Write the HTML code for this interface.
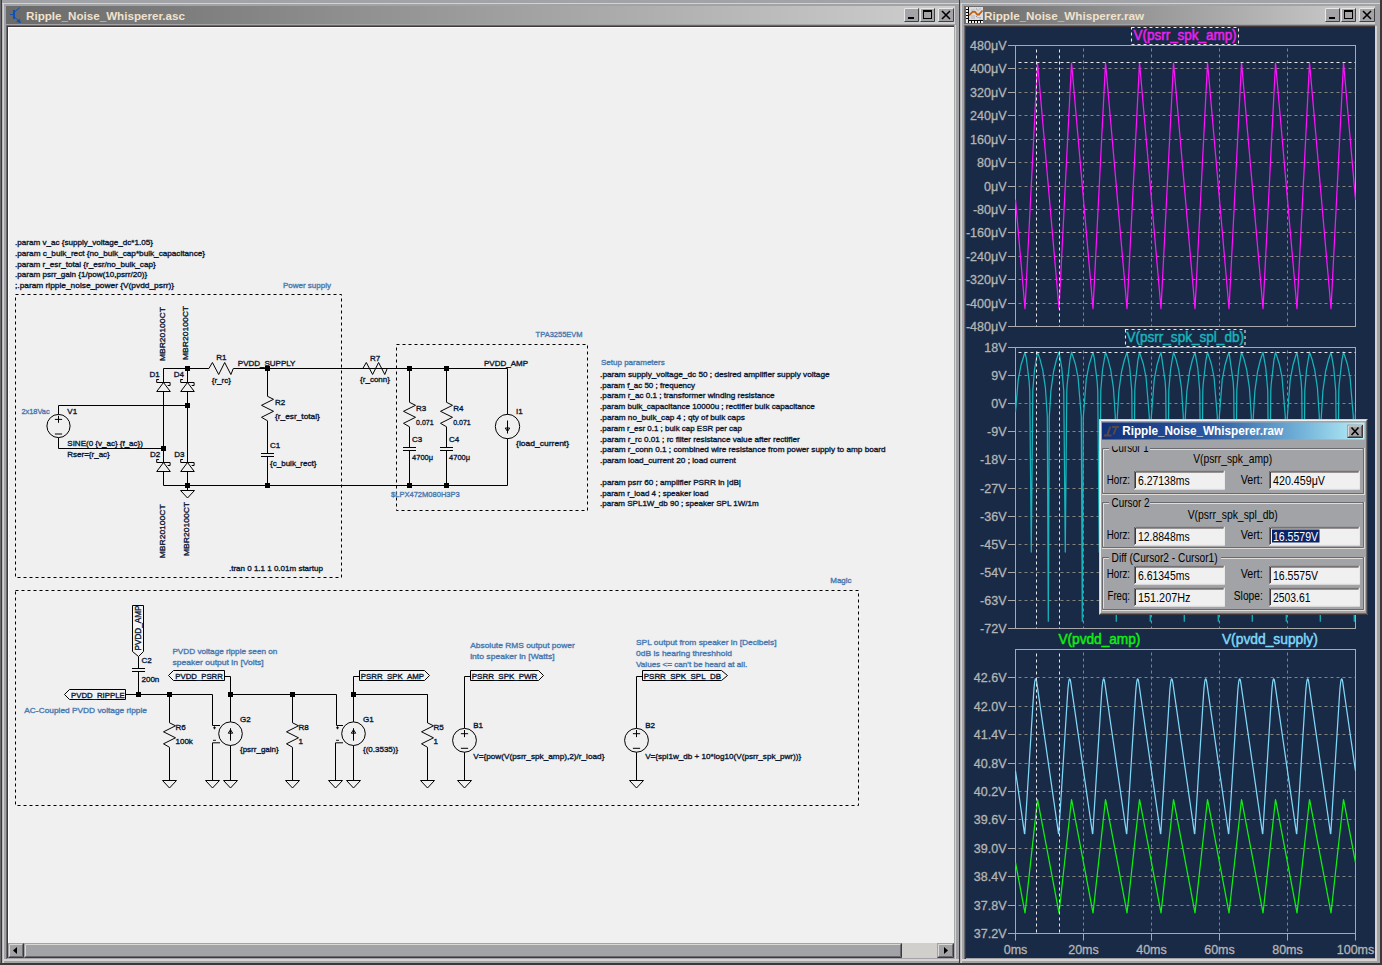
<!DOCTYPE html>
<html><head><meta charset="utf-8"><style>
html,body{margin:0;padding:0;width:1382px;height:965px;overflow:hidden;background:#a4a4a8}
svg{display:block}
</style></head><body>
<svg width="1382" height="965" viewBox="0 0 1382 965" font-family='"Liberation Sans", sans-serif'>
<rect x="0" y="0" width="1382" height="965" fill="#a2a3a6" />
<rect x="0" y="0" width="1" height="965" fill="#6a6a6e" />
<rect x="1" y="0" width="1" height="965" fill="#403838" />
<rect x="2" y="3" width="1" height="962" fill="#b8b8b8" />
<rect x="3" y="3" width="1" height="962" fill="#d6d2ce" />
<rect x="2" y="3" width="957" height="1" fill="#d6d2ce" />
<rect x="959" y="0" width="1" height="965" fill="#403838" />
<rect x="960" y="3" width="1" height="962" fill="#b8b8b8" />
<rect x="961" y="3" width="1" height="962" fill="#d6d2ce" />
<rect x="961" y="3" width="419" height="1" fill="#d6d2ce" />
<rect x="1375" y="26" width="2" height="935" fill="#d6d2ce" />
<rect x="1380" y="0" width="2" height="965" fill="#403838" />
<rect x="0" y="963" width="1382" height="2" fill="#403838" />
<rect x="4" y="959" width="955" height="2" fill="#d6d2ce" />
<rect x="962" y="959" width="415" height="2" fill="#d6d2ce" />
<defs><linearGradient id="tg" x1="0" x2="1" y1="0" y2="0"><stop offset="0" stop-color="#6a6a6a"/><stop offset="0.35" stop-color="#8e8e8e"/><stop offset="1" stop-color="#cfcfcf"/></linearGradient><linearGradient id="dg" x1="0" x2="1" y1="0" y2="0"><stop offset="0" stop-color="#10307a"/><stop offset="0.4" stop-color="#2a58a0"/><stop offset="0.75" stop-color="#70b0d8"/><stop offset="1" stop-color="#b8f0f8"/></linearGradient></defs>
<rect x="6" y="6" width="949" height="18" fill="url(#tg)" />
<rect x="964" y="6" width="411" height="18" fill="url(#tg)" />
<rect x="904" y="8" width="15" height="14" fill="#a4a4a8" />
<path d="M904.5,21.5 V8.5 H918.5" stroke="#e8e8e8" stroke-width="1" fill="none" />
<path d="M904.5,21.5 H918.5 V8.5" stroke="#404040" stroke-width="1" fill="none" />
<rect x="920" y="8" width="15" height="14" fill="#a4a4a8" />
<path d="M920.5,21.5 V8.5 H934.5" stroke="#e8e8e8" stroke-width="1" fill="none" />
<path d="M920.5,21.5 H934.5 V8.5" stroke="#404040" stroke-width="1" fill="none" />
<rect x="938" y="8" width="16" height="14" fill="#a4a4a8" />
<path d="M938.5,21.5 V8.5 H953.5" stroke="#e8e8e8" stroke-width="1" fill="none" />
<path d="M938.5,21.5 H953.5 V8.5" stroke="#404040" stroke-width="1" fill="none" />
<rect x="908" y="17" width="6" height="2" fill="#000" />
<rect x="923.5" y="10.5" width="8" height="8" fill="none" stroke="#000" stroke-width="1"/>
<rect x="923" y="10" width="9" height="2" fill="#000" />
<path d="M942,11 L950,19 M950,11 L942,19" stroke="#000" stroke-width="1.6" fill="none" />
<rect x="1325" y="8" width="15" height="14" fill="#a4a4a8" />
<path d="M1325.5,21.5 V8.5 H1339.5" stroke="#e8e8e8" stroke-width="1" fill="none" />
<path d="M1325.5,21.5 H1339.5 V8.5" stroke="#404040" stroke-width="1" fill="none" />
<rect x="1341" y="8" width="15" height="14" fill="#a4a4a8" />
<path d="M1341.5,21.5 V8.5 H1355.5" stroke="#e8e8e8" stroke-width="1" fill="none" />
<path d="M1341.5,21.5 H1355.5 V8.5" stroke="#404040" stroke-width="1" fill="none" />
<rect x="1359" y="8" width="16" height="14" fill="#a4a4a8" />
<path d="M1359.5,21.5 V8.5 H1374.5" stroke="#e8e8e8" stroke-width="1" fill="none" />
<path d="M1359.5,21.5 H1374.5 V8.5" stroke="#404040" stroke-width="1" fill="none" />
<rect x="1329" y="17" width="6" height="2" fill="#000" />
<rect x="1344.5" y="10.5" width="8" height="8" fill="none" stroke="#000" stroke-width="1"/>
<rect x="1344" y="10" width="9" height="2" fill="#000" />
<path d="M1363,11 L1371,19 M1371,11 L1363,19" stroke="#000" stroke-width="1.6" fill="none" />
<g font-family='"Liberation Sans", sans-serif'>
<text x="26" y="20" font-size="11.6" fill="#f0e2cc" text-anchor="start" font-weight="bold" textLength="159" lengthAdjust="spacingAndGlyphs" >Ripple_Noise_Whisperer.asc</text>
<text x="984" y="20" font-size="11.6" fill="#f0e2cc" text-anchor="start" font-weight="bold" textLength="160" lengthAdjust="spacingAndGlyphs" >Ripple_Noise_Whisperer.raw</text>
</g>
<path d="M10,14.5 H13.5 M15,11.5 L20,7.5 M15,17.5 L20.5,22.5" stroke="#1050b0" stroke-width="1" fill="none" />
<rect x="13" y="10" width="2" height="9" fill="#1050b0" />
<path d="M16.8,21.6 L19.3,19.3 L20.4,22.4 Z" stroke="#1050b0" stroke-width="0.8" fill="#1050b0" />
<rect x="966" y="7" width="17" height="16" fill="#000" />
<rect x="969" y="7" width="14" height="13" fill="#dcdcdc" />
<rect x="966" y="7" width="2" height="2" fill="#f4f4f4" />
<rect x="966" y="10" width="2" height="2" fill="#f4f4f4" />
<rect x="966" y="13" width="2" height="2" fill="#f4f4f4" />
<rect x="966" y="16" width="2" height="2" fill="#f4f4f4" />
<rect x="966" y="19" width="2" height="2" fill="#f4f4f4" />
<rect x="966" y="21" width="2" height="2" fill="#f4f4f4" />
<rect x="969" y="21" width="2" height="2" fill="#f4f4f4" />
<rect x="972" y="21" width="2" height="2" fill="#f4f4f4" />
<rect x="975" y="21" width="2" height="2" fill="#f4f4f4" />
<rect x="978" y="21" width="2" height="2" fill="#f4f4f4" />
<rect x="981" y="21" width="2" height="2" fill="#f4f4f4" />
<rect x="971.5" y="9.5" width="1" height="1" fill="#9090a0" />
<rect x="973.5" y="9.5" width="1" height="1" fill="#9090a0" />
<rect x="976" y="8.5" width="1" height="1" fill="#9090a0" />
<rect x="977.5" y="9.5" width="1" height="1" fill="#9090a0" />
<rect x="979.5" y="8.5" width="1" height="1" fill="#9090a0" />
<rect x="971.5" y="15.5" width="1" height="1" fill="#9090a0" />
<rect x="973.5" y="15.5" width="1" height="1" fill="#9090a0" />
<rect x="976" y="16" width="1" height="1" fill="#9090a0" />
<rect x="977.5" y="17" width="1" height="1" fill="#9090a0" />
<rect x="979.5" y="17" width="1" height="1" fill="#9090a0" />
<rect x="971.5" y="17.5" width="1" height="1" fill="#9090a0" />
<rect x="973.5" y="17.5" width="1" height="1" fill="#9090a0" />
<rect x="979.5" y="18.5" width="1" height="1" fill="#9090a0" />
<path d="M969,15.5 L972.5,11.8 H975 L977.2,14.5 H979 L982.5,10.5" stroke="#c06010" stroke-width="1.8" fill="none" />
<rect x="6" y="25" width="949" height="1" fill="#6a6a6e" />
<rect x="6" y="25" width="1" height="934" fill="#6a6a6e" />
<rect x="7" y="26" width="948" height="1" fill="#403838" />
<rect x="7" y="26" width="1" height="932" fill="#403838" />
<rect x="8" y="27" width="946" height="916" fill="#ffffff" />
<rect x="9" y="28" width="945" height="915" fill="#f0f0f0" />
<rect x="954" y="25" width="1" height="934" fill="#a8a8a8" />
<rect x="955" y="25" width="1" height="936" fill="#d6d2ce" />
<rect x="8" y="943" width="946" height="15" fill="#a2a3a6" />
<rect x="8" y="943" width="16" height="15" fill="#a2a3a6" />
<path d="M9.5,956.5 V944.5 H22.5" stroke="#dcd8d4" stroke-width="1" fill="none" />
<path d="M9.5,956.5 H22.5 V944.5" stroke="#6a6a6e" stroke-width="1" fill="none" />
<path d="M8.5,957.5 H23.5 V943.5" stroke="#403838" stroke-width="1" fill="none" />
<path d="M13,950.5 L17,947 V954 Z" stroke="none" stroke-width="1" fill="#000" />
<rect x="24" y="943" width="878" height="15" fill="#a2a3a6" />
<path d="M25.5,956.5 V944.5 H900.5" stroke="#dcd8d4" stroke-width="1" fill="none" />
<path d="M25.5,956.5 H900.5 V944.5" stroke="#6a6a6e" stroke-width="1" fill="none" />
<path d="M24.5,957.5 H901.5 V943.5" stroke="#403838" stroke-width="1" fill="none" />
<rect x="902" y="943" width="36" height="15" fill="#d0cfcb" />
<rect x="937" y="943" width="17" height="15" fill="#a2a3a6" />
<path d="M938.5,956.5 V944.5 H952.5" stroke="#dcd8d4" stroke-width="1" fill="none" />
<path d="M938.5,956.5 H952.5 V944.5" stroke="#6a6a6e" stroke-width="1" fill="none" />
<path d="M937.5,957.5 H953.5 V943.5" stroke="#403838" stroke-width="1" fill="none" />
<path d="M948,950.5 L944,947 V954 Z" stroke="none" stroke-width="1" fill="#000" />
<rect x="8" y="958" width="947" height="1" fill="#a4a4a8" />
<rect x="964" y="25" width="411" height="1" fill="#6a6a6e" />
<rect x="964" y="25" width="1" height="934" fill="#6a6a6e" />
<rect x="965" y="26" width="410" height="1" fill="#403838" />
<rect x="965" y="26" width="1" height="933" fill="#403838" />
<rect x="966" y="27" width="409" height="931" fill="#182a46" />
<g font-family='"Liberation Sans", sans-serif'>
<text x="15" y="245.1" font-size="8" fill="#0c1a34" text-anchor="start" font-weight="normal" textLength="137.9" lengthAdjust="spacingAndGlyphs" stroke="#0c1a34" stroke-width="0.35">.param v_ac {supply_voltage_dc*1.05}</text>
<text x="15" y="255.79999999999998" font-size="8" fill="#0c1a34" text-anchor="start" font-weight="normal" textLength="190" lengthAdjust="spacingAndGlyphs" stroke="#0c1a34" stroke-width="0.35">.param c_bulk_rect {no_bulk_cap*bulk_capacitance}</text>
<text x="15" y="266.5" font-size="8" fill="#0c1a34" text-anchor="start" font-weight="normal" textLength="140.7" lengthAdjust="spacingAndGlyphs" stroke="#0c1a34" stroke-width="0.35">.param r_esr_total {r_esr/no_bulk_cap}</text>
<text x="15" y="277.2" font-size="8" fill="#0c1a34" text-anchor="start" font-weight="normal" textLength="132.1" lengthAdjust="spacingAndGlyphs" stroke="#0c1a34" stroke-width="0.35">.param psrr_gain {1/pow(10,psrr/20)}</text>
<text x="15" y="287.9" font-size="8" fill="#0c1a34" text-anchor="start" font-weight="normal" textLength="159" lengthAdjust="spacingAndGlyphs" stroke="#0c1a34" stroke-width="0.35">;.param ripple_noise_power {V(pvdd_psrr)}</text>
<text x="331" y="288" font-size="8" fill="#4a7ab0" text-anchor="end" font-weight="normal" stroke="#4a7ab0" stroke-width="0.35">Power supply</text>
<rect x="15.5" y="294.5" width="326.0" height="283.0" fill="none" stroke="#000" stroke-width="1" stroke-dasharray="3,3"/>
<path d="M163.5,382.5 L163.5,368.5 L208.9,368.5" stroke="#000" stroke-width="1.0" fill="none" stroke-linejoin="miter"/>
<path d="M208.9,368.5 L212.4,362.5 L218.70000000000002,374.5 L224.70000000000002,362.5 L230.9,374.5 L233.3,368.5" stroke="#000" stroke-width="1.0" fill="none" stroke-linejoin="miter"/>
<path d="M233.3,368.5 L396,368.5" stroke="#000" stroke-width="1.0" fill="none" stroke-linejoin="miter"/>
<path d="M187.5,368.5 L187.5,382.5" stroke="#000" stroke-width="1.0" fill="none" stroke-linejoin="miter"/>
<rect x="185.0" y="366.0" width="5" height="5" fill="#000" />
<rect x="265.0" y="366.0" width="5" height="5" fill="#000" />
<path d="M156.7,379.5 H158.9 M156.7,379.3 V382.5 H170.1 V385.5 H167.7" stroke="#000" stroke-width="1.0" fill="none" />
<path d="M163.5,382.5 L156.7,391.5 H170.3 Z" stroke="#000" stroke-width="1.0" fill="none" />
<path d="M180.7,379.5 H182.9 M180.7,379.3 V382.5 H194.1 V385.5 H191.7" stroke="#000" stroke-width="1.0" fill="none" />
<path d="M187.5,382.5 L180.7,391.5 H194.3 Z" stroke="#000" stroke-width="1.0" fill="none" />
<path d="M163.5,391.5 L163.5,462.5" stroke="#000" stroke-width="1.0" fill="none" stroke-linejoin="miter"/>
<path d="M187.5,391.5 L187.5,462.5" stroke="#000" stroke-width="1.0" fill="none" stroke-linejoin="miter"/>
<path d="M156.7,459.5 H158.9 M156.7,459.3 V462.5 H170.1 V465.5 H167.7" stroke="#000" stroke-width="1.0" fill="none" />
<path d="M163.5,462.5 L156.7,471.5 H170.3 Z" stroke="#000" stroke-width="1.0" fill="none" />
<path d="M180.7,459.5 H182.9 M180.7,459.3 V462.5 H194.1 V465.5 H191.7" stroke="#000" stroke-width="1.0" fill="none" />
<path d="M187.5,462.5 L180.7,471.5 H194.3 Z" stroke="#000" stroke-width="1.0" fill="none" />
<path d="M163.5,471.5 L163.5,485.5 L396,485.5" stroke="#000" stroke-width="1.0" fill="none" stroke-linejoin="miter"/>
<path d="M187.5,471.5 L187.5,485.5" stroke="#000" stroke-width="1.0" fill="none" stroke-linejoin="miter"/>
<rect x="185.0" y="483.0" width="5" height="5" fill="#000" />
<rect x="265.0" y="483.0" width="5" height="5" fill="#000" />
<path d="M187.5,485.5 V490.5 M180.5,490.5 H194.5 L187.5,498.0 Z" stroke="#000" stroke-width="1.0" fill="none" />
<path d="M58.5,414.4 L58.5,405.5 L187.5,405.5" stroke="#000" stroke-width="1.0" fill="none" stroke-linejoin="miter"/>
<rect x="185.0" y="403.0" width="5" height="5" fill="#000" />
<path d="M58.5,437.6 L58.5,448.5 L163.5,448.5" stroke="#000" stroke-width="1.0" fill="none" stroke-linejoin="miter"/>
<rect x="161.0" y="446.0" width="5" height="5" fill="#000" />
<circle cx="58.5" cy="426" r="11.6" fill="none" stroke="#000" stroke-width="1.0"/>
<path d="M54.9,419.4 H62.1 M58.5,415.7 V422.8 M54.9,434 H62.1" stroke="#000" stroke-width="1.0" fill="none" />
<text x="49.7" y="414" font-size="8" fill="#4a7ab0" text-anchor="end" font-weight="normal" textLength="28.3" lengthAdjust="spacingAndGlyphs" stroke="#4a7ab0" stroke-width="0.35">2x18Vac</text>
<text x="67.3" y="414" font-size="8" fill="#0c1a34" text-anchor="start" font-weight="normal" stroke="#0c1a34" stroke-width="0.35">V1</text>
<text x="67.3" y="445.5" font-size="8" fill="#0c1a34" text-anchor="start" font-weight="normal" stroke="#0c1a34" stroke-width="0.35">SINE(0 {v_ac} {f_ac})</text>
<text x="67.3" y="456.5" font-size="8" fill="#0c1a34" text-anchor="start" font-weight="normal" stroke="#0c1a34" stroke-width="0.35">Rser={r_ac}</text>
<text x="159.8" y="377" font-size="8" fill="#0c1a34" text-anchor="end" font-weight="normal" stroke="#0c1a34" stroke-width="0.35">D1</text>
<text x="184" y="377" font-size="8" fill="#0c1a34" text-anchor="end" font-weight="normal" stroke="#0c1a34" stroke-width="0.35">D4</text>
<text x="160.3" y="457" font-size="8" fill="#0c1a34" text-anchor="end" font-weight="normal" stroke="#0c1a34" stroke-width="0.35">D2</text>
<text x="184.5" y="457" font-size="8" fill="#0c1a34" text-anchor="end" font-weight="normal" stroke="#0c1a34" stroke-width="0.35">D3</text>
<text transform="translate(164.8,361.1) rotate(-90)" font-size="8" fill="#0c1a34" stroke="#0c1a34" stroke-width="0.35" textLength="54" lengthAdjust="spacingAndGlyphs">MBR20100CT</text>
<text transform="translate(187.8,360) rotate(-90)" font-size="8" fill="#0c1a34" stroke="#0c1a34" stroke-width="0.35" textLength="54" lengthAdjust="spacingAndGlyphs">MBR20100CT</text>
<text transform="translate(164.8,558.3) rotate(-90)" font-size="8" fill="#0c1a34" stroke="#0c1a34" stroke-width="0.35" textLength="54" lengthAdjust="spacingAndGlyphs">MBR20100CT</text>
<text transform="translate(189.2,556) rotate(-90)" font-size="8" fill="#0c1a34" stroke="#0c1a34" stroke-width="0.35" textLength="54" lengthAdjust="spacingAndGlyphs">MBR20100CT</text>
<text x="221.3" y="360" font-size="8" fill="#0c1a34" text-anchor="middle" font-weight="normal" stroke="#0c1a34" stroke-width="0.35">R1</text>
<text x="221.3" y="382.8" font-size="8" fill="#0c1a34" text-anchor="middle" font-weight="normal" stroke="#0c1a34" stroke-width="0.35">{r_rc}</text>
<text x="237.8" y="366.2" font-size="8" fill="#0c1a34" text-anchor="start" font-weight="normal" stroke="#0c1a34" stroke-width="0.35">PVDD_SUPPLY</text>
<path d="M267.5,368.5 L267.5,396.3" stroke="#000" stroke-width="1.0" fill="none" stroke-linejoin="miter"/>
<path d="M267.5,396.3 L273.5,399.3 L261.5,405.3 L273.5,411.3 L261.5,417.3 L267.5,420.8" stroke="#000" stroke-width="1.0" fill="none" stroke-linejoin="miter"/>
<path d="M267.5,420.8 L267.5,453.5" stroke="#000" stroke-width="1.0" fill="none" stroke-linejoin="miter"/>
<line x1="261.0" y1="453.5" x2="274.0" y2="453.5" stroke="#000" stroke-width="1" />
<line x1="261.0" y1="456.5" x2="274.0" y2="456.5" stroke="#000" stroke-width="1" />
<path d="M267.5,456.5 L267.5,485.5" stroke="#000" stroke-width="1.0" fill="none" stroke-linejoin="miter"/>
<text x="275" y="405" font-size="8" fill="#0c1a34" text-anchor="start" font-weight="normal" stroke="#0c1a34" stroke-width="0.35">R2</text>
<text x="275" y="419" font-size="8" fill="#0c1a34" text-anchor="start" font-weight="normal" textLength="44.8" lengthAdjust="spacingAndGlyphs" stroke="#0c1a34" stroke-width="0.35">{r_esr_total}</text>
<text x="270.1" y="447.8" font-size="8" fill="#0c1a34" text-anchor="start" font-weight="normal" stroke="#0c1a34" stroke-width="0.35">C1</text>
<text x="270.1" y="465.7" font-size="8" fill="#0c1a34" text-anchor="start" font-weight="normal" stroke="#0c1a34" stroke-width="0.35">{c_bulk_rect}</text>
<text x="229" y="571" font-size="8" fill="#0c1a34" text-anchor="start" font-weight="normal" stroke="#0c1a34" stroke-width="0.35">.tran 0 1.1 1 0.01m startup</text>
<text x="582.6" y="337" font-size="8" fill="#4a7ab0" text-anchor="end" font-weight="normal" textLength="47" lengthAdjust="spacingAndGlyphs" stroke="#4a7ab0" stroke-width="0.35">TPA3255EVM</text>
<rect x="396.5" y="344.5" width="191.0" height="166.0" fill="none" stroke="#000" stroke-width="1" stroke-dasharray="3,3"/>
<path d="M362.8,368.5 L366.3,362.5 L372.6,374.5 L378.6,362.5 L384.8,374.5 L387.2,368.5" stroke="#000" stroke-width="1.0" fill="none" stroke-linejoin="miter"/>
<path d="M341.5,368.5 L362.8,368.5" stroke="#000" stroke-width="1.0" fill="none" stroke-linejoin="miter"/>
<path d="M387.2,368.5 L507.5,368.5 L507.5,414.5" stroke="#000" stroke-width="1.0" fill="none" stroke-linejoin="miter"/>
<path d="M341.5,485.5 L507.5,485.5 L507.5,438.5" stroke="#000" stroke-width="1.0" fill="none" stroke-linejoin="miter"/>
<rect x="407.0" y="366.0" width="5" height="5" fill="#000" />
<rect x="407.0" y="483.0" width="5" height="5" fill="#000" />
<path d="M409.5,368.5 L409.5,402.3" stroke="#000" stroke-width="1.0" fill="none" stroke-linejoin="miter"/>
<path d="M409.5,402.3 L415.5,405.3 L403.5,411.3 L415.5,417.3 L403.5,423.3 L409.5,426.8" stroke="#000" stroke-width="1.0" fill="none" stroke-linejoin="miter"/>
<path d="M409.5,426.8 L409.5,447.5" stroke="#000" stroke-width="1.0" fill="none" stroke-linejoin="miter"/>
<line x1="403.0" y1="447.5" x2="416.0" y2="447.5" stroke="#000" stroke-width="1" />
<line x1="403.0" y1="450.5" x2="416.0" y2="450.5" stroke="#000" stroke-width="1" />
<path d="M409.5,450.5 L409.5,485.5" stroke="#000" stroke-width="1.0" fill="none" stroke-linejoin="miter"/>
<rect x="444.0" y="366.0" width="5" height="5" fill="#000" />
<rect x="444.0" y="483.0" width="5" height="5" fill="#000" />
<path d="M446.5,368.5 L446.5,402.3" stroke="#000" stroke-width="1.0" fill="none" stroke-linejoin="miter"/>
<path d="M446.5,402.3 L452.5,405.3 L440.5,411.3 L452.5,417.3 L440.5,423.3 L446.5,426.8" stroke="#000" stroke-width="1.0" fill="none" stroke-linejoin="miter"/>
<path d="M446.5,426.8 L446.5,447.5" stroke="#000" stroke-width="1.0" fill="none" stroke-linejoin="miter"/>
<line x1="440.0" y1="447.5" x2="453.0" y2="447.5" stroke="#000" stroke-width="1" />
<line x1="440.0" y1="450.5" x2="453.0" y2="450.5" stroke="#000" stroke-width="1" />
<path d="M446.5,450.5 L446.5,485.5" stroke="#000" stroke-width="1.0" fill="none" stroke-linejoin="miter"/>
<circle cx="507.5" cy="426.5" r="12.2" fill="none" stroke="#000" stroke-width="1.0"/>
<path d="M507.5,420.5 V433.5 M505.3,428.0 H509.7 L507.5,431.5 Z" stroke="#000" stroke-width="1.0" fill="none" />
<text x="375.0" y="360.8" font-size="8" fill="#0c1a34" text-anchor="middle" font-weight="normal" stroke="#0c1a34" stroke-width="0.35">R7</text>
<text x="375" y="382" font-size="8" fill="#0c1a34" text-anchor="middle" font-weight="normal" stroke="#0c1a34" stroke-width="0.35">{r_conn}</text>
<text x="484" y="366" font-size="8" fill="#0c1a34" text-anchor="start" font-weight="normal" stroke="#0c1a34" stroke-width="0.35">PVDD_AMP</text>
<text x="416.1" y="411" font-size="8" fill="#0c1a34" text-anchor="start" font-weight="normal" stroke="#0c1a34" stroke-width="0.35">R3</text>
<text x="416.1" y="425" font-size="8" fill="#0c1a34" text-anchor="start" font-weight="normal" textLength="17.5" lengthAdjust="spacingAndGlyphs" stroke="#0c1a34" stroke-width="0.35">0.071</text>
<text x="412.1" y="442" font-size="8" fill="#0c1a34" text-anchor="start" font-weight="normal" stroke="#0c1a34" stroke-width="0.35">C3</text>
<text x="412.1" y="460.3" font-size="8" fill="#0c1a34" text-anchor="start" font-weight="normal" textLength="20.9" lengthAdjust="spacingAndGlyphs" stroke="#0c1a34" stroke-width="0.35">4700μ</text>
<text x="453.2" y="411" font-size="8" fill="#0c1a34" text-anchor="start" font-weight="normal" stroke="#0c1a34" stroke-width="0.35">R4</text>
<text x="453.2" y="425" font-size="8" fill="#0c1a34" text-anchor="start" font-weight="normal" textLength="17.5" lengthAdjust="spacingAndGlyphs" stroke="#0c1a34" stroke-width="0.35">0.071</text>
<text x="449.1" y="442" font-size="8" fill="#0c1a34" text-anchor="start" font-weight="normal" stroke="#0c1a34" stroke-width="0.35">C4</text>
<text x="449.1" y="460.3" font-size="8" fill="#0c1a34" text-anchor="start" font-weight="normal" textLength="20.9" lengthAdjust="spacingAndGlyphs" stroke="#0c1a34" stroke-width="0.35">4700μ</text>
<text x="516.1" y="414" font-size="8" fill="#0c1a34" text-anchor="start" font-weight="normal" stroke="#0c1a34" stroke-width="0.35">I1</text>
<text x="516.1" y="445.5" font-size="8" fill="#0c1a34" text-anchor="start" font-weight="normal" textLength="53" lengthAdjust="spacingAndGlyphs" stroke="#0c1a34" stroke-width="0.35">{load_current}</text>
<text x="391" y="496.8" font-size="8" fill="#4a7ab0" text-anchor="start" font-weight="normal" textLength="68.8" lengthAdjust="spacingAndGlyphs" stroke="#4a7ab0" stroke-width="0.35">$LPX472M080H3P3</text>
<text x="601" y="364.6" font-size="8" fill="#4a7ab0" text-anchor="start" font-weight="normal" textLength="63.7" lengthAdjust="spacingAndGlyphs" stroke="#4a7ab0" stroke-width="0.35">Setup parameters</text>
<text x="600.1" y="376.7" font-size="8" fill="#0c1a34" text-anchor="start" font-weight="normal" textLength="229.5" lengthAdjust="spacingAndGlyphs" stroke="#0c1a34" stroke-width="0.35">.param supply_voltage_dc 50 ; desired amplifier supply voltage</text>
<text x="600.1" y="387.5" font-size="8" fill="#0c1a34" text-anchor="start" font-weight="normal" textLength="94.9" lengthAdjust="spacingAndGlyphs" stroke="#0c1a34" stroke-width="0.35">.param f_ac 50 ; frequency</text>
<text x="600.1" y="398.3" font-size="8" fill="#0c1a34" text-anchor="start" font-weight="normal" textLength="174.5" lengthAdjust="spacingAndGlyphs" stroke="#0c1a34" stroke-width="0.35">.param r_ac 0.1 ; transformer winding resistance</text>
<text x="600.1" y="409.1" font-size="8" fill="#0c1a34" text-anchor="start" font-weight="normal" textLength="214.7" lengthAdjust="spacingAndGlyphs" stroke="#0c1a34" stroke-width="0.35">.param bulk_capacitance 10000u ; rectifier bulk capacitance</text>
<text x="600.1" y="419.9" font-size="8" fill="#0c1a34" text-anchor="start" font-weight="normal" textLength="144.7" lengthAdjust="spacingAndGlyphs" stroke="#0c1a34" stroke-width="0.35">.param no_bulk_cap 4 ; qty of bulk caps</text>
<text x="600.1" y="430.7" font-size="8" fill="#0c1a34" text-anchor="start" font-weight="normal" textLength="141.8" lengthAdjust="spacingAndGlyphs" stroke="#0c1a34" stroke-width="0.35">.param r_esr 0.1 ; bulk cap ESR per cap</text>
<text x="600.1" y="441.5" font-size="8" fill="#0c1a34" text-anchor="start" font-weight="normal" textLength="199.6" lengthAdjust="spacingAndGlyphs" stroke="#0c1a34" stroke-width="0.35">.param r_rc 0.01 ; rc filter resistance value after rectifier</text>
<text x="600.1" y="452.3" font-size="8" fill="#0c1a34" text-anchor="start" font-weight="normal" textLength="285.5" lengthAdjust="spacingAndGlyphs" stroke="#0c1a34" stroke-width="0.35">.param r_conn 0.1 ; combined wire resistance from power supply to amp board</text>
<text x="600.1" y="463.1" font-size="8" fill="#0c1a34" text-anchor="start" font-weight="normal" textLength="135.7" lengthAdjust="spacingAndGlyphs" stroke="#0c1a34" stroke-width="0.35">.param load_current 20 ; load current</text>
<text x="600.1" y="484.7" font-size="8" fill="#0c1a34" text-anchor="start" font-weight="normal" textLength="140.9" lengthAdjust="spacingAndGlyphs" stroke="#0c1a34" stroke-width="0.35">.param psrr 60 ; amplifier PSRR in |dB|</text>
<text x="600.1" y="495.5" font-size="8" fill="#0c1a34" text-anchor="start" font-weight="normal" textLength="108.3" lengthAdjust="spacingAndGlyphs" stroke="#0c1a34" stroke-width="0.35">.param r_load 4 ; speaker load</text>
<text x="600.1" y="506.3" font-size="8" fill="#0c1a34" text-anchor="start" font-weight="normal" textLength="158.6" lengthAdjust="spacingAndGlyphs" stroke="#0c1a34" stroke-width="0.35">.param SPL1W_db 90 ; speaker SPL 1W/1m</text>
<text x="851.6" y="583" font-size="8" fill="#4a7ab0" text-anchor="end" font-weight="normal" stroke="#4a7ab0" stroke-width="0.35">Magic</text>
<rect x="15.5" y="590.5" width="843.0" height="215.0" fill="none" stroke="#000" stroke-width="1" stroke-dasharray="3,3"/>
<path d="M125.5,689.5 H69.5 L64.5,694.5 L69.5,699.5 H125.5 Z" stroke="#000" stroke-width="1" fill="#f4f4f4" />
<text x="71" y="697.8" font-size="8" fill="#0c1a34" text-anchor="start" font-weight="normal" textLength="53.7" lengthAdjust="spacingAndGlyphs" stroke="#0c1a34" stroke-width="0.35">PVDD_RIPPLE</text>
<text x="24.3" y="712.5" font-size="8" fill="#4a7ab0" text-anchor="start" font-weight="normal" textLength="122.6" lengthAdjust="spacingAndGlyphs" stroke="#4a7ab0" stroke-width="0.35">AC-Coupled PVDD voltage ripple</text>
<path d="M125,694.5 L169.5,694.5" stroke="#000" stroke-width="1.0" fill="none" stroke-linejoin="miter"/>
<path d="M138.5,656.5 L138.5,668.5" stroke="#000" stroke-width="1.0" fill="none" stroke-linejoin="miter"/>
<line x1="132.0" y1="668.5" x2="145.0" y2="668.5" stroke="#000" stroke-width="1" />
<line x1="132.0" y1="671.5" x2="145.0" y2="671.5" stroke="#000" stroke-width="1" />
<path d="M138.5,671.5 L138.5,694.5" stroke="#000" stroke-width="1.0" fill="none" stroke-linejoin="miter"/>
<rect x="136.0" y="692.0" width="5" height="5" fill="#000" />
<path d="M132.5,605.5 H143.5 V651.5 L138.5,656.5 L132.5,651.5 Z" stroke="#000" stroke-width="1" fill="#f4f4f4" />
<text transform="translate(141.3,650.5) rotate(-90)" font-size="8.6" fill="#0c1a34" stroke="#0c1a34" stroke-width="0.35" textLength="45" lengthAdjust="spacingAndGlyphs">PVDD_AMP</text>
<text x="141.5" y="663" font-size="8" fill="#0c1a34" text-anchor="start" font-weight="normal" stroke="#0c1a34" stroke-width="0.35">C2</text>
<text x="141.5" y="682" font-size="8" fill="#0c1a34" text-anchor="start" font-weight="normal" stroke="#0c1a34" stroke-width="0.35">200n</text>
<path d="M169.5,694.5 L212.5,694.5 L212.5,725.5 L220.0,725.5" stroke="#000" stroke-width="1.0" fill="none" stroke-linejoin="miter"/>
<path d="M225,676.5 L230.5,676.5 L230.5,721.9" stroke="#000" stroke-width="1.0" fill="none" stroke-linejoin="miter"/>
<path d="M230.5,694.5 L292.5,694.5 L336.5,694.5 L336.5,725.5 L343.0,725.5" stroke="#000" stroke-width="1.0" fill="none" stroke-linejoin="miter"/>
<path d="M359,676.5 L353.5,676.5 L353.5,721.9" stroke="#000" stroke-width="1.0" fill="none" stroke-linejoin="miter"/>
<path d="M353.5,694.5 L427.5,694.5 L427.5,722.8" stroke="#000" stroke-width="1.0" fill="none" stroke-linejoin="miter"/>
<rect x="167.0" y="692.0" width="5" height="5" fill="#000" />
<rect x="228.0" y="692.0" width="5" height="5" fill="#000" />
<rect x="290.0" y="692.0" width="5" height="5" fill="#000" />
<rect x="351.0" y="692.0" width="5" height="5" fill="#000" />
<path d="M224.5,670.5 H173.5 L168.5,675.5 L173.5,680.5 H224.5 Z" stroke="#000" stroke-width="1" fill="#f4f4f4" />
<text x="175.3" y="678.8" font-size="8" fill="#0c1a34" text-anchor="start" font-weight="normal" textLength="47.5" lengthAdjust="spacingAndGlyphs" stroke="#0c1a34" stroke-width="0.35">PVDD_PSRR</text>
<path d="M359.5,670.5 H424.5 L429.5,675.5 L424.5,680.5 H359.5 Z" stroke="#000" stroke-width="1" fill="#f4f4f4" />
<text x="360.8" y="678.8" font-size="8" fill="#0c1a34" text-anchor="start" font-weight="normal" textLength="63.3" lengthAdjust="spacingAndGlyphs" stroke="#0c1a34" stroke-width="0.35">PSRR_SPK_AMP</text>
<text x="172.4" y="653.5" font-size="8" fill="#4a7ab0" text-anchor="start" font-weight="normal" textLength="105" lengthAdjust="spacingAndGlyphs" stroke="#4a7ab0" stroke-width="0.35">PVDD voltage ripple seen on</text>
<text x="172.4" y="664.5" font-size="8" fill="#4a7ab0" text-anchor="start" font-weight="normal" textLength="91.3" lengthAdjust="spacingAndGlyphs" stroke="#4a7ab0" stroke-width="0.35">speaker output in [Volts]</text>
<path d="M169.5,694.5 L169.5,722.8" stroke="#000" stroke-width="1.0" fill="none" stroke-linejoin="miter"/>
<path d="M169.5,722.8 L175.5,725.8 L163.5,731.8 L175.5,737.8 L163.5,743.8 L169.5,747.3" stroke="#000" stroke-width="1.0" fill="none" stroke-linejoin="miter"/>
<path d="M169.5,747.3 L169.5,780.5" stroke="#000" stroke-width="1.0" fill="none" stroke-linejoin="miter"/>
<path d="M169.5,780.5 V780.5 M162.5,780.5 H176.5 L169.5,788.0 Z" stroke="#000" stroke-width="1.0" fill="none" />
<text x="175.5" y="729.5" font-size="8" fill="#0c1a34" text-anchor="start" font-weight="normal" stroke="#0c1a34" stroke-width="0.35">R6</text>
<text x="175.5" y="743.5" font-size="8" fill="#0c1a34" text-anchor="start" font-weight="normal" stroke="#0c1a34" stroke-width="0.35">100k</text>
<path d="M292.5,694.5 L292.5,722.8" stroke="#000" stroke-width="1.0" fill="none" stroke-linejoin="miter"/>
<path d="M292.5,722.8 L298.5,725.8 L286.5,731.8 L298.5,737.8 L286.5,743.8 L292.5,747.3" stroke="#000" stroke-width="1.0" fill="none" stroke-linejoin="miter"/>
<path d="M292.5,747.3 L292.5,780.5" stroke="#000" stroke-width="1.0" fill="none" stroke-linejoin="miter"/>
<path d="M292.5,780.5 V780.5 M285.5,780.5 H299.5 L292.5,788.0 Z" stroke="#000" stroke-width="1.0" fill="none" />
<text x="298.5" y="729.5" font-size="8" fill="#0c1a34" text-anchor="start" font-weight="normal" stroke="#0c1a34" stroke-width="0.35">R8</text>
<text x="298.5" y="743.5" font-size="8" fill="#0c1a34" text-anchor="start" font-weight="normal" stroke="#0c1a34" stroke-width="0.35">1</text>
<path d="M427.5,694.5 L427.5,722.8" stroke="#000" stroke-width="1.0" fill="none" stroke-linejoin="miter"/>
<path d="M427.5,722.8 L433.5,725.8 L421.5,731.8 L433.5,737.8 L421.5,743.8 L427.5,747.3" stroke="#000" stroke-width="1.0" fill="none" stroke-linejoin="miter"/>
<path d="M427.5,747.3 L427.5,780.5" stroke="#000" stroke-width="1.0" fill="none" stroke-linejoin="miter"/>
<path d="M427.5,780.5 V780.5 M420.5,780.5 H434.5 L427.5,788.0 Z" stroke="#000" stroke-width="1.0" fill="none" />
<text x="433.5" y="729.5" font-size="8" fill="#0c1a34" text-anchor="start" font-weight="normal" stroke="#0c1a34" stroke-width="0.35">R5</text>
<text x="433.5" y="743.5" font-size="8" fill="#0c1a34" text-anchor="start" font-weight="normal" stroke="#0c1a34" stroke-width="0.35">1</text>
<circle cx="230.5" cy="733.7" r="11.8" fill="none" stroke="#000" stroke-width="1.0"/>
<path d="M230.5,740.7 V728.2 M228.3,733.2 H232.7 L230.5,729.7 Z" stroke="#000" stroke-width="1.0" fill="none" />
<path d="M230.5,745.5 L230.5,780.5" stroke="#000" stroke-width="1.0" fill="none" stroke-linejoin="miter"/>
<path d="M230.5,780.5 V780.5 M223.5,780.5 H237.5 L230.5,788.0 Z" stroke="#000" stroke-width="1.0" fill="none" />
<path d="M220.0,742.8 L212.5,742.8 L212.5,780.5" stroke="#000" stroke-width="1.0" fill="none" stroke-linejoin="miter"/>
<path d="M212.5,780.5 V780.5 M205.5,780.5 H219.5 L212.5,788.0 Z" stroke="#000" stroke-width="1.0" fill="none" />
<path d="M213.0,727.8 h3 M214.5,726.3 v3 M213.0,740.3 h3" stroke="#000" stroke-width="0.9" fill="none" />
<text x="240.0" y="722" font-size="8" fill="#0c1a34" text-anchor="start" font-weight="normal" stroke="#0c1a34" stroke-width="0.35">G2</text>
<text x="240.0" y="751.6" font-size="8" fill="#0c1a34" text-anchor="start" font-weight="normal" stroke="#0c1a34" stroke-width="0.35">{psrr_gain}</text>
<circle cx="353.5" cy="733.7" r="11.8" fill="none" stroke="#000" stroke-width="1.0"/>
<path d="M353.5,740.7 V728.2 M351.3,733.2 H355.7 L353.5,729.7 Z" stroke="#000" stroke-width="1.0" fill="none" />
<path d="M353.5,745.5 L353.5,780.5" stroke="#000" stroke-width="1.0" fill="none" stroke-linejoin="miter"/>
<path d="M353.5,780.5 V780.5 M346.5,780.5 H360.5 L353.5,788.0 Z" stroke="#000" stroke-width="1.0" fill="none" />
<path d="M343.0,742.8 L335.5,742.8 L335.5,780.5" stroke="#000" stroke-width="1.0" fill="none" stroke-linejoin="miter"/>
<path d="M335.5,780.5 V780.5 M328.5,780.5 H342.5 L335.5,788.0 Z" stroke="#000" stroke-width="1.0" fill="none" />
<path d="M336.0,727.8 h3 M337.5,726.3 v3 M336.0,740.3 h3" stroke="#000" stroke-width="0.9" fill="none" />
<text x="363.0" y="722" font-size="8" fill="#0c1a34" text-anchor="start" font-weight="normal" stroke="#0c1a34" stroke-width="0.35">G1</text>
<text x="363.0" y="751.6" font-size="8" fill="#0c1a34" text-anchor="start" font-weight="normal" stroke="#0c1a34" stroke-width="0.35">{(0.3535)}</text>
<path d="M470.5,676.5 L464.5,676.5 L464.5,728.4" stroke="#000" stroke-width="1.0" fill="none" stroke-linejoin="miter"/>
<circle cx="464.5" cy="740.3" r="11.9" fill="none" stroke="#000" stroke-width="1.0"/>
<path d="M460.9,733.6999999999999 H468.1 M464.5,730.0 V737.0999999999999 M460.9,748.3 H468.1" stroke="#000" stroke-width="1.0" fill="none" />
<path d="M464.5,752.2 L464.5,780.5" stroke="#000" stroke-width="1.0" fill="none" stroke-linejoin="miter"/>
<path d="M464.5,780.5 V780.5 M457.5,780.5 H471.5 L464.5,788.0 Z" stroke="#000" stroke-width="1.0" fill="none" />
<path d="M470.5,670.5 H538.5 L543.5,675.5 L538.5,680.5 H470.5 Z" stroke="#000" stroke-width="1" fill="#f4f4f4" />
<text x="471.8" y="678.8" font-size="8" fill="#0c1a34" text-anchor="start" font-weight="normal" textLength="65.5" lengthAdjust="spacingAndGlyphs" stroke="#0c1a34" stroke-width="0.35">PSRR_SPK_PWR</text>
<text x="473.2" y="727.9" font-size="8" fill="#0c1a34" text-anchor="start" font-weight="normal" stroke="#0c1a34" stroke-width="0.35">B1</text>
<text x="473.2" y="759.4" font-size="8" fill="#0c1a34" text-anchor="start" font-weight="normal" textLength="131.2" lengthAdjust="spacingAndGlyphs" stroke="#0c1a34" stroke-width="0.35">V={pow(V(psrr_spk_amp),2)/r_load}</text>
<path d="M642.5,676.5 L636.5,676.5 L636.5,728.4" stroke="#000" stroke-width="1.0" fill="none" stroke-linejoin="miter"/>
<circle cx="636.5" cy="740.3" r="11.9" fill="none" stroke="#000" stroke-width="1.0"/>
<path d="M632.9,733.6999999999999 H640.1 M636.5,730.0 V737.0999999999999 M632.9,748.3 H640.1" stroke="#000" stroke-width="1.0" fill="none" />
<path d="M636.5,752.2 L636.5,780.5" stroke="#000" stroke-width="1.0" fill="none" stroke-linejoin="miter"/>
<path d="M636.5,780.5 V780.5 M629.5,780.5 H643.5 L636.5,788.0 Z" stroke="#000" stroke-width="1.0" fill="none" />
<path d="M642.5,670.5 H721.5 L727.5,675.5 L721.5,680.5 H642.5 Z" stroke="#000" stroke-width="1" fill="#f4f4f4" />
<text x="643.8" y="678.8" font-size="8" fill="#0c1a34" text-anchor="start" font-weight="normal" textLength="77.2" lengthAdjust="spacingAndGlyphs" stroke="#0c1a34" stroke-width="0.35">PSRR_SPK_SPL_DB</text>
<text x="645.2" y="727.9" font-size="8" fill="#0c1a34" text-anchor="start" font-weight="normal" stroke="#0c1a34" stroke-width="0.35">B2</text>
<text x="645.2" y="759.4" font-size="8" fill="#0c1a34" text-anchor="start" font-weight="normal" textLength="156" lengthAdjust="spacingAndGlyphs" stroke="#0c1a34" stroke-width="0.35">V={spl1w_db + 10*log10(V(psrr_spk_pwr))}</text>
<text x="470.2" y="648.3" font-size="8" fill="#4a7ab0" text-anchor="start" font-weight="normal" textLength="104.5" lengthAdjust="spacingAndGlyphs" stroke="#4a7ab0" stroke-width="0.35">Absolute RMS output power</text>
<text x="470.2" y="659" font-size="8" fill="#4a7ab0" text-anchor="start" font-weight="normal" textLength="84.4" lengthAdjust="spacingAndGlyphs" stroke="#4a7ab0" stroke-width="0.35">into speaker in [Watts]</text>
<text x="636" y="645.3" font-size="8" fill="#4a7ab0" text-anchor="start" font-weight="normal" textLength="140.5" lengthAdjust="spacingAndGlyphs" stroke="#4a7ab0" stroke-width="0.35">SPL output from speaker in [Decibels]</text>
<text x="636" y="656" font-size="8" fill="#4a7ab0" text-anchor="start" font-weight="normal" textLength="96" lengthAdjust="spacingAndGlyphs" stroke="#4a7ab0" stroke-width="0.35">0dB is hearing threshhold</text>
<text x="636" y="666.5" font-size="8" fill="#4a7ab0" text-anchor="start" font-weight="normal" textLength="111.2" lengthAdjust="spacingAndGlyphs" stroke="#4a7ab0" stroke-width="0.35">Values &lt;= can't be heard at all.</text>
</g>
<clipPath id="cp1"><rect x="1015" y="45" width="341" height="282"/></clipPath>
<clipPath id="cp2"><rect x="1015" y="347" width="341" height="282"/></clipPath>
<clipPath id="cp3"><rect x="1015" y="649" width="341" height="285"/></clipPath>
<line x1="1018.5" y1="45.5" x2="1355.5" y2="45.5" stroke="#84827e" stroke-width="1" stroke-dasharray="3,3"/>
<line x1="1018.5" y1="68.5" x2="1355.5" y2="68.5" stroke="#84827e" stroke-width="1" stroke-dasharray="3,3"/>
<line x1="1018.5" y1="92.5" x2="1355.5" y2="92.5" stroke="#84827e" stroke-width="1" stroke-dasharray="3,3"/>
<line x1="1018.5" y1="115.5" x2="1355.5" y2="115.5" stroke="#84827e" stroke-width="1" stroke-dasharray="3,3"/>
<line x1="1018.5" y1="139.5" x2="1355.5" y2="139.5" stroke="#84827e" stroke-width="1" stroke-dasharray="3,3"/>
<line x1="1018.5" y1="162.5" x2="1355.5" y2="162.5" stroke="#84827e" stroke-width="1" stroke-dasharray="3,3"/>
<line x1="1018.5" y1="186.5" x2="1355.5" y2="186.5" stroke="#84827e" stroke-width="1" stroke-dasharray="3,3"/>
<line x1="1018.5" y1="209.5" x2="1355.5" y2="209.5" stroke="#84827e" stroke-width="1" stroke-dasharray="3,3"/>
<line x1="1018.5" y1="232.5" x2="1355.5" y2="232.5" stroke="#84827e" stroke-width="1" stroke-dasharray="3,3"/>
<line x1="1018.5" y1="256.5" x2="1355.5" y2="256.5" stroke="#84827e" stroke-width="1" stroke-dasharray="3,3"/>
<line x1="1018.5" y1="279.5" x2="1355.5" y2="279.5" stroke="#84827e" stroke-width="1" stroke-dasharray="3,3"/>
<line x1="1018.5" y1="303.5" x2="1355.5" y2="303.5" stroke="#84827e" stroke-width="1" stroke-dasharray="3,3"/>
<line x1="1018.5" y1="326.5" x2="1355.5" y2="326.5" stroke="#84827e" stroke-width="1" stroke-dasharray="3,3"/>
<line x1="1083.5" y1="48.5" x2="1083.5" y2="326.5" stroke="#84827e" stroke-width="1" stroke-dasharray="3,3"/>
<line x1="1151.5" y1="48.5" x2="1151.5" y2="326.5" stroke="#84827e" stroke-width="1" stroke-dasharray="3,3"/>
<line x1="1219.5" y1="48.5" x2="1219.5" y2="326.5" stroke="#84827e" stroke-width="1" stroke-dasharray="3,3"/>
<line x1="1287.5" y1="48.5" x2="1287.5" y2="326.5" stroke="#84827e" stroke-width="1" stroke-dasharray="3,3"/>
<rect x="1015.5" y="45.5" width="340.0" height="281.0" fill="none" stroke="#a8a8a8" stroke-width="1"/>
<line x1="1008.0" y1="45.5" x2="1015.5" y2="45.5" stroke="#a8a8a8" stroke-width="1"/>
<text x="1006.5" y="50.0" font-size="12.5" fill="#b4b4b4" stroke="#b4b4b4" stroke-width="0.3" text-anchor="end">480μV</text>
<line x1="1008.0" y1="68.5" x2="1015.5" y2="68.5" stroke="#a8a8a8" stroke-width="1"/>
<text x="1006.5" y="73.0" font-size="12.5" fill="#b4b4b4" stroke="#b4b4b4" stroke-width="0.3" text-anchor="end">400μV</text>
<line x1="1008.0" y1="92.5" x2="1015.5" y2="92.5" stroke="#a8a8a8" stroke-width="1"/>
<text x="1006.5" y="97.0" font-size="12.5" fill="#b4b4b4" stroke="#b4b4b4" stroke-width="0.3" text-anchor="end">320μV</text>
<line x1="1008.0" y1="115.5" x2="1015.5" y2="115.5" stroke="#a8a8a8" stroke-width="1"/>
<text x="1006.5" y="120.0" font-size="12.5" fill="#b4b4b4" stroke="#b4b4b4" stroke-width="0.3" text-anchor="end">240μV</text>
<line x1="1008.0" y1="139.5" x2="1015.5" y2="139.5" stroke="#a8a8a8" stroke-width="1"/>
<text x="1006.5" y="144.0" font-size="12.5" fill="#b4b4b4" stroke="#b4b4b4" stroke-width="0.3" text-anchor="end">160μV</text>
<line x1="1008.0" y1="162.5" x2="1015.5" y2="162.5" stroke="#a8a8a8" stroke-width="1"/>
<text x="1006.5" y="167.0" font-size="12.5" fill="#b4b4b4" stroke="#b4b4b4" stroke-width="0.3" text-anchor="end">80μV</text>
<line x1="1008.0" y1="186.5" x2="1015.5" y2="186.5" stroke="#a8a8a8" stroke-width="1"/>
<text x="1006.5" y="191.0" font-size="12.5" fill="#b4b4b4" stroke="#b4b4b4" stroke-width="0.3" text-anchor="end">0μV</text>
<line x1="1008.0" y1="209.5" x2="1015.5" y2="209.5" stroke="#a8a8a8" stroke-width="1"/>
<text x="1006.5" y="214.0" font-size="12.5" fill="#b4b4b4" stroke="#b4b4b4" stroke-width="0.3" text-anchor="end">-80μV</text>
<line x1="1008.0" y1="232.5" x2="1015.5" y2="232.5" stroke="#a8a8a8" stroke-width="1"/>
<text x="1006.5" y="237.0" font-size="12.5" fill="#b4b4b4" stroke="#b4b4b4" stroke-width="0.3" text-anchor="end">-160μV</text>
<line x1="1008.0" y1="256.5" x2="1015.5" y2="256.5" stroke="#a8a8a8" stroke-width="1"/>
<text x="1006.5" y="261.0" font-size="12.5" fill="#b4b4b4" stroke="#b4b4b4" stroke-width="0.3" text-anchor="end">-240μV</text>
<line x1="1008.0" y1="279.5" x2="1015.5" y2="279.5" stroke="#a8a8a8" stroke-width="1"/>
<text x="1006.5" y="284.0" font-size="12.5" fill="#b4b4b4" stroke="#b4b4b4" stroke-width="0.3" text-anchor="end">-320μV</text>
<line x1="1008.0" y1="303.5" x2="1015.5" y2="303.5" stroke="#a8a8a8" stroke-width="1"/>
<text x="1006.5" y="308.0" font-size="12.5" fill="#b4b4b4" stroke="#b4b4b4" stroke-width="0.3" text-anchor="end">-400μV</text>
<line x1="1008.0" y1="326.5" x2="1015.5" y2="326.5" stroke="#a8a8a8" stroke-width="1"/>
<text x="1006.5" y="331.0" font-size="12.5" fill="#b4b4b4" stroke="#b4b4b4" stroke-width="0.3" text-anchor="end">-480μV</text>
<g clip-path="url(#cp1)">
<path d="M1015.50,199.75 L1015.75,202.61 L1016.00,205.48 L1016.25,208.35 L1016.50,211.22 L1016.75,214.08 L1017.00,216.95 L1017.25,219.82 L1017.50,222.69 L1017.75,225.55 L1018.00,228.42 L1018.25,231.29 L1018.50,234.16 L1018.75,237.02 L1019.00,239.89 L1019.25,242.76 L1019.50,245.62 L1019.75,248.49 L1020.00,251.36 L1020.25,254.23 L1020.50,257.09 L1020.75,259.96 L1021.00,262.83 L1021.25,265.70 L1021.50,268.56 L1021.75,271.43 L1022.00,274.30 L1022.25,277.17 L1022.50,280.03 L1022.75,282.90 L1023.00,285.77 L1023.25,288.64 L1023.50,291.50 L1023.75,294.37 L1024.00,297.24 L1024.25,300.11 L1024.50,302.97 L1024.75,305.84 L1025.00,308.71 L1025.25,304.41 L1025.50,299.48 L1025.75,294.56 L1026.00,289.63 L1026.25,284.71 L1026.50,279.78 L1026.75,274.86 L1027.00,269.94 L1027.25,265.01 L1027.50,260.09 L1027.75,255.16 L1028.00,250.24 L1028.25,245.31 L1028.50,240.39 L1028.75,235.46 L1029.00,230.54 L1029.25,225.62 L1029.50,220.69 L1029.75,215.77 L1030.00,210.84 L1030.25,205.92 L1030.50,200.99 L1030.75,196.07 L1031.00,191.14 L1031.25,186.22 L1031.50,181.29 L1031.75,176.37 L1032.00,171.45 L1032.25,166.52 L1032.50,161.60 L1032.75,156.67 L1033.00,151.75 L1033.25,146.82 L1033.50,141.90 L1033.75,136.97 L1034.00,132.05 L1034.25,127.13 L1034.50,122.20 L1034.75,117.28 L1035.00,112.35 L1035.25,107.43 L1035.50,102.50 L1035.75,97.58 L1036.00,92.65 L1036.25,87.73 L1036.50,82.81 L1036.75,77.88 L1037.00,72.96 L1037.25,68.03 L1037.50,63.11 L1037.75,64.98 L1038.00,67.84 L1038.25,70.71 L1038.50,73.58 L1038.75,76.45 L1039.00,79.31 L1039.25,82.18 L1039.50,85.05 L1039.75,87.92 L1040.00,90.78 L1040.25,93.65 L1040.50,96.52 L1040.75,99.39 L1041.00,102.25 L1041.25,105.12 L1041.50,107.99 L1041.75,110.86 L1042.00,113.72 L1042.25,116.59 L1042.50,119.46 L1042.75,122.33 L1043.00,125.19 L1043.25,128.06 L1043.50,130.93 L1043.75,133.80 L1044.00,136.66 L1044.25,139.53 L1044.50,142.40 L1044.75,145.27 L1045.00,148.13 L1045.25,151.00 L1045.50,153.87 L1045.75,156.73 L1046.00,159.60 L1046.25,162.47 L1046.50,165.34 L1046.75,168.20 L1047.00,171.07 L1047.25,173.94 L1047.50,176.81 L1047.75,179.67 L1048.00,182.54 L1048.25,185.41 L1048.50,188.28 L1048.75,191.14 L1049.00,194.01 L1049.25,196.88 L1049.50,199.75 L1049.75,202.61 L1050.00,205.48 L1050.25,208.35 L1050.50,211.22 L1050.75,214.08 L1051.00,216.95 L1051.25,219.82 L1051.50,222.69 L1051.75,225.55 L1052.00,228.42 L1052.25,231.29 L1052.50,234.16 L1052.75,237.02 L1053.00,239.89 L1053.25,242.76 L1053.50,245.62 L1053.75,248.49 L1054.00,251.36 L1054.25,254.23 L1054.50,257.09 L1054.75,259.96 L1055.00,262.83 L1055.25,265.70 L1055.50,268.56 L1055.75,271.43 L1056.00,274.30 L1056.25,277.17 L1056.50,280.03 L1056.75,282.90 L1057.00,285.77 L1057.25,288.64 L1057.50,291.50 L1057.75,294.37 L1058.00,297.24 L1058.25,300.11 L1058.50,302.97 L1058.75,305.84 L1059.00,308.71 L1059.25,304.41 L1059.50,299.48 L1059.75,294.56 L1060.00,289.63 L1060.25,284.71 L1060.50,279.78 L1060.75,274.86 L1061.00,269.94 L1061.25,265.01 L1061.50,260.09 L1061.75,255.16 L1062.00,250.24 L1062.25,245.31 L1062.50,240.39 L1062.75,235.46 L1063.00,230.54 L1063.25,225.62 L1063.50,220.69 L1063.75,215.77 L1064.00,210.84 L1064.25,205.92 L1064.50,200.99 L1064.75,196.07 L1065.00,191.14 L1065.25,186.22 L1065.50,181.29 L1065.75,176.37 L1066.00,171.45 L1066.25,166.52 L1066.50,161.60 L1066.75,156.67 L1067.00,151.75 L1067.25,146.82 L1067.50,141.90 L1067.75,136.97 L1068.00,132.05 L1068.25,127.13 L1068.50,122.20 L1068.75,117.28 L1069.00,112.35 L1069.25,107.43 L1069.50,102.50 L1069.75,97.58 L1070.00,92.65 L1070.25,87.73 L1070.50,82.81 L1070.75,77.88 L1071.00,72.96 L1071.25,68.03 L1071.50,63.11 L1071.75,64.98 L1072.00,67.84 L1072.25,70.71 L1072.50,73.58 L1072.75,76.45 L1073.00,79.31 L1073.25,82.18 L1073.50,85.05 L1073.75,87.92 L1074.00,90.78 L1074.25,93.65 L1074.50,96.52 L1074.75,99.39 L1075.00,102.25 L1075.25,105.12 L1075.50,107.99 L1075.75,110.86 L1076.00,113.72 L1076.25,116.59 L1076.50,119.46 L1076.75,122.33 L1077.00,125.19 L1077.25,128.06 L1077.50,130.93 L1077.75,133.80 L1078.00,136.66 L1078.25,139.53 L1078.50,142.40 L1078.75,145.27 L1079.00,148.13 L1079.25,151.00 L1079.50,153.87 L1079.75,156.73 L1080.00,159.60 L1080.25,162.47 L1080.50,165.34 L1080.75,168.20 L1081.00,171.07 L1081.25,173.94 L1081.50,176.81 L1081.75,179.67 L1082.00,182.54 L1082.25,185.41 L1082.50,188.28 L1082.75,191.14 L1083.00,194.01 L1083.25,196.88 L1083.50,199.75 L1083.75,202.61 L1084.00,205.48 L1084.25,208.35 L1084.50,211.22 L1084.75,214.08 L1085.00,216.95 L1085.25,219.82 L1085.50,222.69 L1085.75,225.55 L1086.00,228.42 L1086.25,231.29 L1086.50,234.16 L1086.75,237.02 L1087.00,239.89 L1087.25,242.76 L1087.50,245.62 L1087.75,248.49 L1088.00,251.36 L1088.25,254.23 L1088.50,257.09 L1088.75,259.96 L1089.00,262.83 L1089.25,265.70 L1089.50,268.56 L1089.75,271.43 L1090.00,274.30 L1090.25,277.17 L1090.50,280.03 L1090.75,282.90 L1091.00,285.77 L1091.25,288.64 L1091.50,291.50 L1091.75,294.37 L1092.00,297.24 L1092.25,300.11 L1092.50,302.97 L1092.75,305.84 L1093.00,308.71 L1093.25,304.41 L1093.50,299.48 L1093.75,294.56 L1094.00,289.63 L1094.25,284.71 L1094.50,279.78 L1094.75,274.86 L1095.00,269.94 L1095.25,265.01 L1095.50,260.09 L1095.75,255.16 L1096.00,250.24 L1096.25,245.31 L1096.50,240.39 L1096.75,235.46 L1097.00,230.54 L1097.25,225.62 L1097.50,220.69 L1097.75,215.77 L1098.00,210.84 L1098.25,205.92 L1098.50,200.99 L1098.75,196.07 L1099.00,191.14 L1099.25,186.22 L1099.50,181.29 L1099.75,176.37 L1100.00,171.45 L1100.25,166.52 L1100.50,161.60 L1100.75,156.67 L1101.00,151.75 L1101.25,146.82 L1101.50,141.90 L1101.75,136.97 L1102.00,132.05 L1102.25,127.13 L1102.50,122.20 L1102.75,117.28 L1103.00,112.35 L1103.25,107.43 L1103.50,102.50 L1103.75,97.58 L1104.00,92.65 L1104.25,87.73 L1104.50,82.81 L1104.75,77.88 L1105.00,72.96 L1105.25,68.03 L1105.50,63.11 L1105.75,64.98 L1106.00,67.84 L1106.25,70.71 L1106.50,73.58 L1106.75,76.45 L1107.00,79.31 L1107.25,82.18 L1107.50,85.05 L1107.75,87.92 L1108.00,90.78 L1108.25,93.65 L1108.50,96.52 L1108.75,99.39 L1109.00,102.25 L1109.25,105.12 L1109.50,107.99 L1109.75,110.86 L1110.00,113.72 L1110.25,116.59 L1110.50,119.46 L1110.75,122.33 L1111.00,125.19 L1111.25,128.06 L1111.50,130.93 L1111.75,133.80 L1112.00,136.66 L1112.25,139.53 L1112.50,142.40 L1112.75,145.27 L1113.00,148.13 L1113.25,151.00 L1113.50,153.87 L1113.75,156.73 L1114.00,159.60 L1114.25,162.47 L1114.50,165.34 L1114.75,168.20 L1115.00,171.07 L1115.25,173.94 L1115.50,176.81 L1115.75,179.67 L1116.00,182.54 L1116.25,185.41 L1116.50,188.28 L1116.75,191.14 L1117.00,194.01 L1117.25,196.88 L1117.50,199.75 L1117.75,202.61 L1118.00,205.48 L1118.25,208.35 L1118.50,211.22 L1118.75,214.08 L1119.00,216.95 L1119.25,219.82 L1119.50,222.69 L1119.75,225.55 L1120.00,228.42 L1120.25,231.29 L1120.50,234.16 L1120.75,237.02 L1121.00,239.89 L1121.25,242.76 L1121.50,245.62 L1121.75,248.49 L1122.00,251.36 L1122.25,254.23 L1122.50,257.09 L1122.75,259.96 L1123.00,262.83 L1123.25,265.70 L1123.50,268.56 L1123.75,271.43 L1124.00,274.30 L1124.25,277.17 L1124.50,280.03 L1124.75,282.90 L1125.00,285.77 L1125.25,288.64 L1125.50,291.50 L1125.75,294.37 L1126.00,297.24 L1126.25,300.11 L1126.50,302.97 L1126.75,305.84 L1127.00,308.71 L1127.25,304.41 L1127.50,299.48 L1127.75,294.56 L1128.00,289.63 L1128.25,284.71 L1128.50,279.78 L1128.75,274.86 L1129.00,269.94 L1129.25,265.01 L1129.50,260.09 L1129.75,255.16 L1130.00,250.24 L1130.25,245.31 L1130.50,240.39 L1130.75,235.46 L1131.00,230.54 L1131.25,225.62 L1131.50,220.69 L1131.75,215.77 L1132.00,210.84 L1132.25,205.92 L1132.50,200.99 L1132.75,196.07 L1133.00,191.14 L1133.25,186.22 L1133.50,181.29 L1133.75,176.37 L1134.00,171.45 L1134.25,166.52 L1134.50,161.60 L1134.75,156.67 L1135.00,151.75 L1135.25,146.82 L1135.50,141.90 L1135.75,136.97 L1136.00,132.05 L1136.25,127.13 L1136.50,122.20 L1136.75,117.28 L1137.00,112.35 L1137.25,107.43 L1137.50,102.50 L1137.75,97.58 L1138.00,92.65 L1138.25,87.73 L1138.50,82.81 L1138.75,77.88 L1139.00,72.96 L1139.25,68.03 L1139.50,63.11 L1139.75,64.98 L1140.00,67.84 L1140.25,70.71 L1140.50,73.58 L1140.75,76.45 L1141.00,79.31 L1141.25,82.18 L1141.50,85.05 L1141.75,87.92 L1142.00,90.78 L1142.25,93.65 L1142.50,96.52 L1142.75,99.39 L1143.00,102.25 L1143.25,105.12 L1143.50,107.99 L1143.75,110.86 L1144.00,113.72 L1144.25,116.59 L1144.50,119.46 L1144.75,122.33 L1145.00,125.19 L1145.25,128.06 L1145.50,130.93 L1145.75,133.80 L1146.00,136.66 L1146.25,139.53 L1146.50,142.40 L1146.75,145.27 L1147.00,148.13 L1147.25,151.00 L1147.50,153.87 L1147.75,156.73 L1148.00,159.60 L1148.25,162.47 L1148.50,165.34 L1148.75,168.20 L1149.00,171.07 L1149.25,173.94 L1149.50,176.81 L1149.75,179.67 L1150.00,182.54 L1150.25,185.41 L1150.50,188.28 L1150.75,191.14 L1151.00,194.01 L1151.25,196.88 L1151.50,199.75 L1151.75,202.61 L1152.00,205.48 L1152.25,208.35 L1152.50,211.22 L1152.75,214.08 L1153.00,216.95 L1153.25,219.82 L1153.50,222.69 L1153.75,225.55 L1154.00,228.42 L1154.25,231.29 L1154.50,234.16 L1154.75,237.02 L1155.00,239.89 L1155.25,242.76 L1155.50,245.62 L1155.75,248.49 L1156.00,251.36 L1156.25,254.23 L1156.50,257.09 L1156.75,259.96 L1157.00,262.83 L1157.25,265.70 L1157.50,268.56 L1157.75,271.43 L1158.00,274.30 L1158.25,277.17 L1158.50,280.03 L1158.75,282.90 L1159.00,285.77 L1159.25,288.64 L1159.50,291.50 L1159.75,294.37 L1160.00,297.24 L1160.25,300.11 L1160.50,302.97 L1160.75,305.84 L1161.00,308.71 L1161.25,304.41 L1161.50,299.48 L1161.75,294.56 L1162.00,289.63 L1162.25,284.71 L1162.50,279.78 L1162.75,274.86 L1163.00,269.94 L1163.25,265.01 L1163.50,260.09 L1163.75,255.16 L1164.00,250.24 L1164.25,245.31 L1164.50,240.39 L1164.75,235.46 L1165.00,230.54 L1165.25,225.62 L1165.50,220.69 L1165.75,215.77 L1166.00,210.84 L1166.25,205.92 L1166.50,200.99 L1166.75,196.07 L1167.00,191.14 L1167.25,186.22 L1167.50,181.29 L1167.75,176.37 L1168.00,171.45 L1168.25,166.52 L1168.50,161.60 L1168.75,156.67 L1169.00,151.75 L1169.25,146.82 L1169.50,141.90 L1169.75,136.97 L1170.00,132.05 L1170.25,127.13 L1170.50,122.20 L1170.75,117.28 L1171.00,112.35 L1171.25,107.43 L1171.50,102.50 L1171.75,97.58 L1172.00,92.65 L1172.25,87.73 L1172.50,82.81 L1172.75,77.88 L1173.00,72.96 L1173.25,68.03 L1173.50,63.11 L1173.75,64.98 L1174.00,67.84 L1174.25,70.71 L1174.50,73.58 L1174.75,76.45 L1175.00,79.31 L1175.25,82.18 L1175.50,85.05 L1175.75,87.92 L1176.00,90.78 L1176.25,93.65 L1176.50,96.52 L1176.75,99.39 L1177.00,102.25 L1177.25,105.12 L1177.50,107.99 L1177.75,110.86 L1178.00,113.72 L1178.25,116.59 L1178.50,119.46 L1178.75,122.33 L1179.00,125.19 L1179.25,128.06 L1179.50,130.93 L1179.75,133.80 L1180.00,136.66 L1180.25,139.53 L1180.50,142.40 L1180.75,145.27 L1181.00,148.13 L1181.25,151.00 L1181.50,153.87 L1181.75,156.73 L1182.00,159.60 L1182.25,162.47 L1182.50,165.34 L1182.75,168.20 L1183.00,171.07 L1183.25,173.94 L1183.50,176.81 L1183.75,179.67 L1184.00,182.54 L1184.25,185.41 L1184.50,188.28 L1184.75,191.14 L1185.00,194.01 L1185.25,196.88 L1185.50,199.75 L1185.75,202.61 L1186.00,205.48 L1186.25,208.35 L1186.50,211.22 L1186.75,214.08 L1187.00,216.95 L1187.25,219.82 L1187.50,222.69 L1187.75,225.55 L1188.00,228.42 L1188.25,231.29 L1188.50,234.16 L1188.75,237.02 L1189.00,239.89 L1189.25,242.76 L1189.50,245.62 L1189.75,248.49 L1190.00,251.36 L1190.25,254.23 L1190.50,257.09 L1190.75,259.96 L1191.00,262.83 L1191.25,265.70 L1191.50,268.56 L1191.75,271.43 L1192.00,274.30 L1192.25,277.17 L1192.50,280.03 L1192.75,282.90 L1193.00,285.77 L1193.25,288.64 L1193.50,291.50 L1193.75,294.37 L1194.00,297.24 L1194.25,300.11 L1194.50,302.97 L1194.75,305.84 L1195.00,308.71 L1195.25,304.41 L1195.50,299.48 L1195.75,294.56 L1196.00,289.63 L1196.25,284.71 L1196.50,279.78 L1196.75,274.86 L1197.00,269.94 L1197.25,265.01 L1197.50,260.09 L1197.75,255.16 L1198.00,250.24 L1198.25,245.31 L1198.50,240.39 L1198.75,235.46 L1199.00,230.54 L1199.25,225.62 L1199.50,220.69 L1199.75,215.77 L1200.00,210.84 L1200.25,205.92 L1200.50,200.99 L1200.75,196.07 L1201.00,191.14 L1201.25,186.22 L1201.50,181.29 L1201.75,176.37 L1202.00,171.45 L1202.25,166.52 L1202.50,161.60 L1202.75,156.67 L1203.00,151.75 L1203.25,146.82 L1203.50,141.90 L1203.75,136.97 L1204.00,132.05 L1204.25,127.13 L1204.50,122.20 L1204.75,117.28 L1205.00,112.35 L1205.25,107.43 L1205.50,102.50 L1205.75,97.58 L1206.00,92.65 L1206.25,87.73 L1206.50,82.81 L1206.75,77.88 L1207.00,72.96 L1207.25,68.03 L1207.50,63.11 L1207.75,64.98 L1208.00,67.84 L1208.25,70.71 L1208.50,73.58 L1208.75,76.45 L1209.00,79.31 L1209.25,82.18 L1209.50,85.05 L1209.75,87.92 L1210.00,90.78 L1210.25,93.65 L1210.50,96.52 L1210.75,99.39 L1211.00,102.25 L1211.25,105.12 L1211.50,107.99 L1211.75,110.86 L1212.00,113.72 L1212.25,116.59 L1212.50,119.46 L1212.75,122.33 L1213.00,125.19 L1213.25,128.06 L1213.50,130.93 L1213.75,133.80 L1214.00,136.66 L1214.25,139.53 L1214.50,142.40 L1214.75,145.27 L1215.00,148.13 L1215.25,151.00 L1215.50,153.87 L1215.75,156.73 L1216.00,159.60 L1216.25,162.47 L1216.50,165.34 L1216.75,168.20 L1217.00,171.07 L1217.25,173.94 L1217.50,176.81 L1217.75,179.67 L1218.00,182.54 L1218.25,185.41 L1218.50,188.28 L1218.75,191.14 L1219.00,194.01 L1219.25,196.88 L1219.50,199.75 L1219.75,202.61 L1220.00,205.48 L1220.25,208.35 L1220.50,211.22 L1220.75,214.08 L1221.00,216.95 L1221.25,219.82 L1221.50,222.69 L1221.75,225.55 L1222.00,228.42 L1222.25,231.29 L1222.50,234.16 L1222.75,237.02 L1223.00,239.89 L1223.25,242.76 L1223.50,245.62 L1223.75,248.49 L1224.00,251.36 L1224.25,254.23 L1224.50,257.09 L1224.75,259.96 L1225.00,262.83 L1225.25,265.70 L1225.50,268.56 L1225.75,271.43 L1226.00,274.30 L1226.25,277.17 L1226.50,280.03 L1226.75,282.90 L1227.00,285.77 L1227.25,288.64 L1227.50,291.50 L1227.75,294.37 L1228.00,297.24 L1228.25,300.11 L1228.50,302.97 L1228.75,305.84 L1229.00,308.71 L1229.25,304.41 L1229.50,299.48 L1229.75,294.56 L1230.00,289.63 L1230.25,284.71 L1230.50,279.78 L1230.75,274.86 L1231.00,269.94 L1231.25,265.01 L1231.50,260.09 L1231.75,255.16 L1232.00,250.24 L1232.25,245.31 L1232.50,240.39 L1232.75,235.46 L1233.00,230.54 L1233.25,225.62 L1233.50,220.69 L1233.75,215.77 L1234.00,210.84 L1234.25,205.92 L1234.50,200.99 L1234.75,196.07 L1235.00,191.14 L1235.25,186.22 L1235.50,181.29 L1235.75,176.37 L1236.00,171.45 L1236.25,166.52 L1236.50,161.60 L1236.75,156.67 L1237.00,151.75 L1237.25,146.82 L1237.50,141.90 L1237.75,136.97 L1238.00,132.05 L1238.25,127.13 L1238.50,122.20 L1238.75,117.28 L1239.00,112.35 L1239.25,107.43 L1239.50,102.50 L1239.75,97.58 L1240.00,92.65 L1240.25,87.73 L1240.50,82.81 L1240.75,77.88 L1241.00,72.96 L1241.25,68.03 L1241.50,63.11 L1241.75,64.98 L1242.00,67.84 L1242.25,70.71 L1242.50,73.58 L1242.75,76.45 L1243.00,79.31 L1243.25,82.18 L1243.50,85.05 L1243.75,87.92 L1244.00,90.78 L1244.25,93.65 L1244.50,96.52 L1244.75,99.39 L1245.00,102.25 L1245.25,105.12 L1245.50,107.99 L1245.75,110.86 L1246.00,113.72 L1246.25,116.59 L1246.50,119.46 L1246.75,122.33 L1247.00,125.19 L1247.25,128.06 L1247.50,130.93 L1247.75,133.80 L1248.00,136.66 L1248.25,139.53 L1248.50,142.40 L1248.75,145.27 L1249.00,148.13 L1249.25,151.00 L1249.50,153.87 L1249.75,156.73 L1250.00,159.60 L1250.25,162.47 L1250.50,165.34 L1250.75,168.20 L1251.00,171.07 L1251.25,173.94 L1251.50,176.81 L1251.75,179.67 L1252.00,182.54 L1252.25,185.41 L1252.50,188.28 L1252.75,191.14 L1253.00,194.01 L1253.25,196.88 L1253.50,199.75 L1253.75,202.61 L1254.00,205.48 L1254.25,208.35 L1254.50,211.22 L1254.75,214.08 L1255.00,216.95 L1255.25,219.82 L1255.50,222.69 L1255.75,225.55 L1256.00,228.42 L1256.25,231.29 L1256.50,234.16 L1256.75,237.02 L1257.00,239.89 L1257.25,242.76 L1257.50,245.62 L1257.75,248.49 L1258.00,251.36 L1258.25,254.23 L1258.50,257.09 L1258.75,259.96 L1259.00,262.83 L1259.25,265.70 L1259.50,268.56 L1259.75,271.43 L1260.00,274.30 L1260.25,277.17 L1260.50,280.03 L1260.75,282.90 L1261.00,285.77 L1261.25,288.64 L1261.50,291.50 L1261.75,294.37 L1262.00,297.24 L1262.25,300.11 L1262.50,302.97 L1262.75,305.84 L1263.00,308.71 L1263.25,304.41 L1263.50,299.48 L1263.75,294.56 L1264.00,289.63 L1264.25,284.71 L1264.50,279.78 L1264.75,274.86 L1265.00,269.94 L1265.25,265.01 L1265.50,260.09 L1265.75,255.16 L1266.00,250.24 L1266.25,245.31 L1266.50,240.39 L1266.75,235.46 L1267.00,230.54 L1267.25,225.62 L1267.50,220.69 L1267.75,215.77 L1268.00,210.84 L1268.25,205.92 L1268.50,200.99 L1268.75,196.07 L1269.00,191.14 L1269.25,186.22 L1269.50,181.29 L1269.75,176.37 L1270.00,171.45 L1270.25,166.52 L1270.50,161.60 L1270.75,156.67 L1271.00,151.75 L1271.25,146.82 L1271.50,141.90 L1271.75,136.97 L1272.00,132.05 L1272.25,127.13 L1272.50,122.20 L1272.75,117.28 L1273.00,112.35 L1273.25,107.43 L1273.50,102.50 L1273.75,97.58 L1274.00,92.65 L1274.25,87.73 L1274.50,82.81 L1274.75,77.88 L1275.00,72.96 L1275.25,68.03 L1275.50,63.11 L1275.75,64.98 L1276.00,67.84 L1276.25,70.71 L1276.50,73.58 L1276.75,76.45 L1277.00,79.31 L1277.25,82.18 L1277.50,85.05 L1277.75,87.92 L1278.00,90.78 L1278.25,93.65 L1278.50,96.52 L1278.75,99.39 L1279.00,102.25 L1279.25,105.12 L1279.50,107.99 L1279.75,110.86 L1280.00,113.72 L1280.25,116.59 L1280.50,119.46 L1280.75,122.33 L1281.00,125.19 L1281.25,128.06 L1281.50,130.93 L1281.75,133.80 L1282.00,136.66 L1282.25,139.53 L1282.50,142.40 L1282.75,145.27 L1283.00,148.13 L1283.25,151.00 L1283.50,153.87 L1283.75,156.73 L1284.00,159.60 L1284.25,162.47 L1284.50,165.34 L1284.75,168.20 L1285.00,171.07 L1285.25,173.94 L1285.50,176.81 L1285.75,179.67 L1286.00,182.54 L1286.25,185.41 L1286.50,188.28 L1286.75,191.14 L1287.00,194.01 L1287.25,196.88 L1287.50,199.75 L1287.75,202.61 L1288.00,205.48 L1288.25,208.35 L1288.50,211.22 L1288.75,214.08 L1289.00,216.95 L1289.25,219.82 L1289.50,222.69 L1289.75,225.55 L1290.00,228.42 L1290.25,231.29 L1290.50,234.16 L1290.75,237.02 L1291.00,239.89 L1291.25,242.76 L1291.50,245.62 L1291.75,248.49 L1292.00,251.36 L1292.25,254.23 L1292.50,257.09 L1292.75,259.96 L1293.00,262.83 L1293.25,265.70 L1293.50,268.56 L1293.75,271.43 L1294.00,274.30 L1294.25,277.17 L1294.50,280.03 L1294.75,282.90 L1295.00,285.77 L1295.25,288.64 L1295.50,291.50 L1295.75,294.37 L1296.00,297.24 L1296.25,300.11 L1296.50,302.97 L1296.75,305.84 L1297.00,308.71 L1297.25,304.41 L1297.50,299.48 L1297.75,294.56 L1298.00,289.63 L1298.25,284.71 L1298.50,279.78 L1298.75,274.86 L1299.00,269.94 L1299.25,265.01 L1299.50,260.09 L1299.75,255.16 L1300.00,250.24 L1300.25,245.31 L1300.50,240.39 L1300.75,235.46 L1301.00,230.54 L1301.25,225.62 L1301.50,220.69 L1301.75,215.77 L1302.00,210.84 L1302.25,205.92 L1302.50,200.99 L1302.75,196.07 L1303.00,191.14 L1303.25,186.22 L1303.50,181.29 L1303.75,176.37 L1304.00,171.45 L1304.25,166.52 L1304.50,161.60 L1304.75,156.67 L1305.00,151.75 L1305.25,146.82 L1305.50,141.90 L1305.75,136.97 L1306.00,132.05 L1306.25,127.13 L1306.50,122.20 L1306.75,117.28 L1307.00,112.35 L1307.25,107.43 L1307.50,102.50 L1307.75,97.58 L1308.00,92.65 L1308.25,87.73 L1308.50,82.81 L1308.75,77.88 L1309.00,72.96 L1309.25,68.03 L1309.50,63.11 L1309.75,64.98 L1310.00,67.84 L1310.25,70.71 L1310.50,73.58 L1310.75,76.45 L1311.00,79.31 L1311.25,82.18 L1311.50,85.05 L1311.75,87.92 L1312.00,90.78 L1312.25,93.65 L1312.50,96.52 L1312.75,99.39 L1313.00,102.25 L1313.25,105.12 L1313.50,107.99 L1313.75,110.86 L1314.00,113.72 L1314.25,116.59 L1314.50,119.46 L1314.75,122.33 L1315.00,125.19 L1315.25,128.06 L1315.50,130.93 L1315.75,133.80 L1316.00,136.66 L1316.25,139.53 L1316.50,142.40 L1316.75,145.27 L1317.00,148.13 L1317.25,151.00 L1317.50,153.87 L1317.75,156.73 L1318.00,159.60 L1318.25,162.47 L1318.50,165.34 L1318.75,168.20 L1319.00,171.07 L1319.25,173.94 L1319.50,176.81 L1319.75,179.67 L1320.00,182.54 L1320.25,185.41 L1320.50,188.28 L1320.75,191.14 L1321.00,194.01 L1321.25,196.88 L1321.50,199.75 L1321.75,202.61 L1322.00,205.48 L1322.25,208.35 L1322.50,211.22 L1322.75,214.08 L1323.00,216.95 L1323.25,219.82 L1323.50,222.69 L1323.75,225.55 L1324.00,228.42 L1324.25,231.29 L1324.50,234.16 L1324.75,237.02 L1325.00,239.89 L1325.25,242.76 L1325.50,245.62 L1325.75,248.49 L1326.00,251.36 L1326.25,254.23 L1326.50,257.09 L1326.75,259.96 L1327.00,262.83 L1327.25,265.70 L1327.50,268.56 L1327.75,271.43 L1328.00,274.30 L1328.25,277.17 L1328.50,280.03 L1328.75,282.90 L1329.00,285.77 L1329.25,288.64 L1329.50,291.50 L1329.75,294.37 L1330.00,297.24 L1330.25,300.11 L1330.50,302.97 L1330.75,305.84 L1331.00,308.71 L1331.25,304.41 L1331.50,299.48 L1331.75,294.56 L1332.00,289.63 L1332.25,284.71 L1332.50,279.78 L1332.75,274.86 L1333.00,269.94 L1333.25,265.01 L1333.50,260.09 L1333.75,255.16 L1334.00,250.24 L1334.25,245.31 L1334.50,240.39 L1334.75,235.46 L1335.00,230.54 L1335.25,225.62 L1335.50,220.69 L1335.75,215.77 L1336.00,210.84 L1336.25,205.92 L1336.50,200.99 L1336.75,196.07 L1337.00,191.14 L1337.25,186.22 L1337.50,181.29 L1337.75,176.37 L1338.00,171.45 L1338.25,166.52 L1338.50,161.60 L1338.75,156.67 L1339.00,151.75 L1339.25,146.82 L1339.50,141.90 L1339.75,136.97 L1340.00,132.05 L1340.25,127.13 L1340.50,122.20 L1340.75,117.28 L1341.00,112.35 L1341.25,107.43 L1341.50,102.50 L1341.75,97.58 L1342.00,92.65 L1342.25,87.73 L1342.50,82.81 L1342.75,77.88 L1343.00,72.96 L1343.25,68.03 L1343.50,63.11 L1343.75,64.98 L1344.00,67.84 L1344.25,70.71 L1344.50,73.58 L1344.75,76.45 L1345.00,79.31 L1345.25,82.18 L1345.50,85.05 L1345.75,87.92 L1346.00,90.78 L1346.25,93.65 L1346.50,96.52 L1346.75,99.39 L1347.00,102.25 L1347.25,105.12 L1347.50,107.99 L1347.75,110.86 L1348.00,113.72 L1348.25,116.59 L1348.50,119.46 L1348.75,122.33 L1349.00,125.19 L1349.25,128.06 L1349.50,130.93 L1349.75,133.80 L1350.00,136.66 L1350.25,139.53 L1350.50,142.40 L1350.75,145.27 L1351.00,148.13 L1351.25,151.00 L1351.50,153.87 L1351.75,156.73 L1352.00,159.60 L1352.25,162.47 L1352.50,165.34 L1352.75,168.20 L1353.00,171.07 L1353.25,173.94 L1353.50,176.81 L1353.75,179.67 L1354.00,182.54 L1354.25,185.41 L1354.50,188.28 L1354.75,191.14 L1355.00,194.01 L1355.25,196.88 L1355.50,199.75" fill="none" stroke="#ff10ff" stroke-width="1.25" stroke-linejoin="round"/>
</g>
<line x1="1018.5" y1="347.5" x2="1355.5" y2="347.5" stroke="#84827e" stroke-width="1" stroke-dasharray="3,3"/>
<line x1="1018.5" y1="375.5" x2="1355.5" y2="375.5" stroke="#84827e" stroke-width="1" stroke-dasharray="3,3"/>
<line x1="1018.5" y1="403.5" x2="1355.5" y2="403.5" stroke="#84827e" stroke-width="1" stroke-dasharray="3,3"/>
<line x1="1018.5" y1="431.5" x2="1355.5" y2="431.5" stroke="#84827e" stroke-width="1" stroke-dasharray="3,3"/>
<line x1="1018.5" y1="459.5" x2="1355.5" y2="459.5" stroke="#84827e" stroke-width="1" stroke-dasharray="3,3"/>
<line x1="1018.5" y1="488.5" x2="1355.5" y2="488.5" stroke="#84827e" stroke-width="1" stroke-dasharray="3,3"/>
<line x1="1018.5" y1="516.5" x2="1355.5" y2="516.5" stroke="#84827e" stroke-width="1" stroke-dasharray="3,3"/>
<line x1="1018.5" y1="544.5" x2="1355.5" y2="544.5" stroke="#84827e" stroke-width="1" stroke-dasharray="3,3"/>
<line x1="1018.5" y1="572.5" x2="1355.5" y2="572.5" stroke="#84827e" stroke-width="1" stroke-dasharray="3,3"/>
<line x1="1018.5" y1="600.5" x2="1355.5" y2="600.5" stroke="#84827e" stroke-width="1" stroke-dasharray="3,3"/>
<line x1="1018.5" y1="628.5" x2="1355.5" y2="628.5" stroke="#84827e" stroke-width="1" stroke-dasharray="3,3"/>
<line x1="1083.5" y1="350.5" x2="1083.5" y2="628.5" stroke="#84827e" stroke-width="1" stroke-dasharray="3,3"/>
<line x1="1151.5" y1="350.5" x2="1151.5" y2="628.5" stroke="#84827e" stroke-width="1" stroke-dasharray="3,3"/>
<line x1="1219.5" y1="350.5" x2="1219.5" y2="628.5" stroke="#84827e" stroke-width="1" stroke-dasharray="3,3"/>
<line x1="1287.5" y1="350.5" x2="1287.5" y2="628.5" stroke="#84827e" stroke-width="1" stroke-dasharray="3,3"/>
<rect x="1015.5" y="347.5" width="340.0" height="281.0" fill="none" stroke="#a8a8a8" stroke-width="1"/>
<line x1="1008.0" y1="347.5" x2="1015.5" y2="347.5" stroke="#a8a8a8" stroke-width="1"/>
<text x="1006.5" y="352.0" font-size="12.5" fill="#b4b4b4" stroke="#b4b4b4" stroke-width="0.3" text-anchor="end">18V</text>
<line x1="1008.0" y1="375.5" x2="1015.5" y2="375.5" stroke="#a8a8a8" stroke-width="1"/>
<text x="1006.5" y="380.0" font-size="12.5" fill="#b4b4b4" stroke="#b4b4b4" stroke-width="0.3" text-anchor="end">9V</text>
<line x1="1008.0" y1="403.5" x2="1015.5" y2="403.5" stroke="#a8a8a8" stroke-width="1"/>
<text x="1006.5" y="408.0" font-size="12.5" fill="#b4b4b4" stroke="#b4b4b4" stroke-width="0.3" text-anchor="end">0V</text>
<line x1="1008.0" y1="431.5" x2="1015.5" y2="431.5" stroke="#a8a8a8" stroke-width="1"/>
<text x="1006.5" y="436.0" font-size="12.5" fill="#b4b4b4" stroke="#b4b4b4" stroke-width="0.3" text-anchor="end">-9V</text>
<line x1="1008.0" y1="459.5" x2="1015.5" y2="459.5" stroke="#a8a8a8" stroke-width="1"/>
<text x="1006.5" y="464.0" font-size="12.5" fill="#b4b4b4" stroke="#b4b4b4" stroke-width="0.3" text-anchor="end">-18V</text>
<line x1="1008.0" y1="488.5" x2="1015.5" y2="488.5" stroke="#a8a8a8" stroke-width="1"/>
<text x="1006.5" y="493.0" font-size="12.5" fill="#b4b4b4" stroke="#b4b4b4" stroke-width="0.3" text-anchor="end">-27V</text>
<line x1="1008.0" y1="516.5" x2="1015.5" y2="516.5" stroke="#a8a8a8" stroke-width="1"/>
<text x="1006.5" y="521.0" font-size="12.5" fill="#b4b4b4" stroke="#b4b4b4" stroke-width="0.3" text-anchor="end">-36V</text>
<line x1="1008.0" y1="544.5" x2="1015.5" y2="544.5" stroke="#a8a8a8" stroke-width="1"/>
<text x="1006.5" y="549.0" font-size="12.5" fill="#b4b4b4" stroke="#b4b4b4" stroke-width="0.3" text-anchor="end">-45V</text>
<line x1="1008.0" y1="572.5" x2="1015.5" y2="572.5" stroke="#a8a8a8" stroke-width="1"/>
<text x="1006.5" y="577.0" font-size="12.5" fill="#b4b4b4" stroke="#b4b4b4" stroke-width="0.3" text-anchor="end">-54V</text>
<line x1="1008.0" y1="600.5" x2="1015.5" y2="600.5" stroke="#a8a8a8" stroke-width="1"/>
<text x="1006.5" y="605.0" font-size="12.5" fill="#b4b4b4" stroke="#b4b4b4" stroke-width="0.3" text-anchor="end">-63V</text>
<line x1="1008.0" y1="628.5" x2="1015.5" y2="628.5" stroke="#a8a8a8" stroke-width="1"/>
<text x="1006.5" y="633.0" font-size="12.5" fill="#b4b4b4" stroke="#b4b4b4" stroke-width="0.3" text-anchor="end">-72V</text>
<g clip-path="url(#cp2)">
<path d="M1015.50,411.71 L1018.22,379.58 L1020.94,365.29 L1025.02,352.29 L1026.38,358.96 L1029.10,381.05 L1029.75,390.68 L1031.28,552.01 L1032.81,390.16 L1034.54,369.75 L1037.53,352.16 L1039.98,359.16 L1042.70,369.89 L1045.42,387.92 L1047.29,416.31 L1048.28,621.32 L1049.26,417.71 L1050.86,391.14 L1053.58,371.50 L1056.30,360.23 L1059.02,352.29 L1061.74,367.82 L1063.75,390.68 L1065.28,552.01 L1066.81,390.16 L1067.18,384.28 L1069.90,360.34 L1071.53,352.16 L1075.34,364.00 L1078.06,377.43 L1081.29,416.31 L1082.28,621.32 L1083.26,417.71 L1086.22,379.58 L1088.94,365.29 L1093.02,352.29 L1094.38,358.96 L1097.10,381.05 L1097.75,390.68 L1099.28,552.01 L1100.81,390.16 L1102.54,369.75 L1105.53,352.16 L1107.98,359.16 L1110.70,369.89 L1113.42,387.92 L1115.29,416.31 L1116.28,621.32 L1117.26,417.71 L1118.86,391.14 L1121.58,371.50 L1124.30,360.23 L1127.02,352.29 L1129.74,367.82 L1131.75,390.68 L1133.28,552.01 L1134.81,390.16 L1135.18,384.28 L1137.90,360.34 L1139.53,352.16 L1143.34,364.00 L1146.06,377.43 L1149.29,416.31 L1150.28,621.32 L1151.26,417.71 L1154.22,379.58 L1156.94,365.29 L1159.66,355.97 L1161.02,352.29 L1165.10,381.05 L1165.75,390.68 L1167.28,552.01 L1168.81,390.16 L1170.54,369.75 L1173.53,352.16 L1175.98,359.16 L1178.70,369.89 L1181.42,387.92 L1183.29,416.31 L1184.28,621.32 L1185.26,417.71 L1186.86,391.14 L1189.58,371.50 L1192.30,360.23 L1195.02,352.29 L1197.74,367.82 L1199.75,390.68 L1201.28,552.01 L1202.81,390.16 L1203.18,384.28 L1205.90,360.34 L1207.53,352.16 L1211.34,364.00 L1214.06,377.43 L1217.29,416.31 L1218.28,621.32 L1219.26,417.71 L1222.22,379.58 L1224.94,365.29 L1227.66,355.97 L1229.02,352.29 L1233.10,381.05 L1233.75,390.68 L1235.28,552.01 L1236.81,390.16 L1238.54,369.75 L1241.53,352.16 L1243.98,359.16 L1246.70,369.89 L1249.42,387.92 L1251.29,416.31 L1252.28,621.32 L1253.26,417.71 L1254.86,391.14 L1257.58,371.50 L1260.30,360.23 L1263.02,352.29 L1265.74,367.82 L1267.75,390.68 L1269.28,552.01 L1270.81,390.16 L1271.18,384.28 L1273.90,360.34 L1275.53,352.16 L1279.34,364.00 L1282.06,377.43 L1285.29,416.31 L1286.28,621.32 L1287.26,417.71 L1290.22,379.58 L1292.94,365.29 L1295.66,355.97 L1297.02,352.29 L1301.10,381.05 L1301.75,390.68 L1303.28,552.01 L1304.81,390.16 L1306.54,369.75 L1309.53,352.16 L1311.98,359.16 L1314.70,369.89 L1317.42,387.92 L1319.29,416.31 L1320.28,621.32 L1321.26,417.71 L1322.86,391.14 L1325.58,371.50 L1328.30,360.23 L1331.02,352.29 L1333.74,367.82 L1335.75,390.68 L1337.28,552.01 L1338.81,390.16 L1339.18,384.28 L1341.90,360.34 L1343.53,352.16 L1347.34,364.00 L1350.06,377.43 L1353.29,416.31 L1354.28,621.32 L1355.26,417.71 L1355.50,411.71" fill="none" stroke="#18b4bc" stroke-width="1.25" stroke-linejoin="round"/>
</g>
<line x1="1018.5" y1="677.5" x2="1355.5" y2="677.5" stroke="#84827e" stroke-width="1" stroke-dasharray="3,3"/>
<line x1="1018.5" y1="706.5" x2="1355.5" y2="706.5" stroke="#84827e" stroke-width="1" stroke-dasharray="3,3"/>
<line x1="1018.5" y1="734.5" x2="1355.5" y2="734.5" stroke="#84827e" stroke-width="1" stroke-dasharray="3,3"/>
<line x1="1018.5" y1="763.5" x2="1355.5" y2="763.5" stroke="#84827e" stroke-width="1" stroke-dasharray="3,3"/>
<line x1="1018.5" y1="791.5" x2="1355.5" y2="791.5" stroke="#84827e" stroke-width="1" stroke-dasharray="3,3"/>
<line x1="1018.5" y1="819.5" x2="1355.5" y2="819.5" stroke="#84827e" stroke-width="1" stroke-dasharray="3,3"/>
<line x1="1018.5" y1="848.5" x2="1355.5" y2="848.5" stroke="#84827e" stroke-width="1" stroke-dasharray="3,3"/>
<line x1="1018.5" y1="876.5" x2="1355.5" y2="876.5" stroke="#84827e" stroke-width="1" stroke-dasharray="3,3"/>
<line x1="1018.5" y1="905.5" x2="1355.5" y2="905.5" stroke="#84827e" stroke-width="1" stroke-dasharray="3,3"/>
<line x1="1018.5" y1="933.5" x2="1355.5" y2="933.5" stroke="#84827e" stroke-width="1" stroke-dasharray="3,3"/>
<line x1="1083.5" y1="652.5" x2="1083.5" y2="933.5" stroke="#84827e" stroke-width="1" stroke-dasharray="3,3"/>
<line x1="1151.5" y1="652.5" x2="1151.5" y2="933.5" stroke="#84827e" stroke-width="1" stroke-dasharray="3,3"/>
<line x1="1219.5" y1="652.5" x2="1219.5" y2="933.5" stroke="#84827e" stroke-width="1" stroke-dasharray="3,3"/>
<line x1="1287.5" y1="652.5" x2="1287.5" y2="933.5" stroke="#84827e" stroke-width="1" stroke-dasharray="3,3"/>
<rect x="1015.5" y="649.5" width="340.0" height="284.0" fill="none" stroke="#a8a8a8" stroke-width="1"/>
<line x1="1008.0" y1="677.5" x2="1015.5" y2="677.5" stroke="#a8a8a8" stroke-width="1"/>
<text x="1006.5" y="682.0" font-size="12.5" fill="#b4b4b4" stroke="#b4b4b4" stroke-width="0.3" text-anchor="end">42.6V</text>
<line x1="1008.0" y1="706.5" x2="1015.5" y2="706.5" stroke="#a8a8a8" stroke-width="1"/>
<text x="1006.5" y="711.0" font-size="12.5" fill="#b4b4b4" stroke="#b4b4b4" stroke-width="0.3" text-anchor="end">42.0V</text>
<line x1="1008.0" y1="734.5" x2="1015.5" y2="734.5" stroke="#a8a8a8" stroke-width="1"/>
<text x="1006.5" y="739.0" font-size="12.5" fill="#b4b4b4" stroke="#b4b4b4" stroke-width="0.3" text-anchor="end">41.4V</text>
<line x1="1008.0" y1="763.5" x2="1015.5" y2="763.5" stroke="#a8a8a8" stroke-width="1"/>
<text x="1006.5" y="768.0" font-size="12.5" fill="#b4b4b4" stroke="#b4b4b4" stroke-width="0.3" text-anchor="end">40.8V</text>
<line x1="1008.0" y1="791.5" x2="1015.5" y2="791.5" stroke="#a8a8a8" stroke-width="1"/>
<text x="1006.5" y="796.0" font-size="12.5" fill="#b4b4b4" stroke="#b4b4b4" stroke-width="0.3" text-anchor="end">40.2V</text>
<line x1="1008.0" y1="819.5" x2="1015.5" y2="819.5" stroke="#a8a8a8" stroke-width="1"/>
<text x="1006.5" y="824.0" font-size="12.5" fill="#b4b4b4" stroke="#b4b4b4" stroke-width="0.3" text-anchor="end">39.6V</text>
<line x1="1008.0" y1="848.5" x2="1015.5" y2="848.5" stroke="#a8a8a8" stroke-width="1"/>
<text x="1006.5" y="853.0" font-size="12.5" fill="#b4b4b4" stroke="#b4b4b4" stroke-width="0.3" text-anchor="end">39.0V</text>
<line x1="1008.0" y1="876.5" x2="1015.5" y2="876.5" stroke="#a8a8a8" stroke-width="1"/>
<text x="1006.5" y="881.0" font-size="12.5" fill="#b4b4b4" stroke="#b4b4b4" stroke-width="0.3" text-anchor="end">38.4V</text>
<line x1="1008.0" y1="905.5" x2="1015.5" y2="905.5" stroke="#a8a8a8" stroke-width="1"/>
<text x="1006.5" y="910.0" font-size="12.5" fill="#b4b4b4" stroke="#b4b4b4" stroke-width="0.3" text-anchor="end">37.8V</text>
<line x1="1008.0" y1="933.5" x2="1015.5" y2="933.5" stroke="#a8a8a8" stroke-width="1"/>
<text x="1006.5" y="938.0" font-size="12.5" fill="#b4b4b4" stroke="#b4b4b4" stroke-width="0.3" text-anchor="end">37.2V</text>
<g clip-path="url(#cp3)">
<path d="M1015.50,771.01 L1015.75,772.75 L1016.00,774.48 L1016.25,776.22 L1016.50,777.96 L1016.75,779.70 L1017.00,781.43 L1017.25,783.17 L1017.50,784.91 L1017.75,786.64 L1018.00,788.38 L1018.25,790.12 L1018.50,791.86 L1018.75,793.59 L1019.00,795.33 L1019.25,797.07 L1019.50,798.81 L1019.75,800.54 L1020.00,802.28 L1020.25,804.02 L1020.50,805.75 L1020.75,807.49 L1021.00,809.23 L1021.25,810.97 L1021.50,812.70 L1021.75,814.44 L1022.00,816.18 L1022.25,817.91 L1022.50,819.65 L1022.75,821.39 L1023.00,823.13 L1023.25,824.86 L1023.50,826.60 L1023.75,828.34 L1024.00,830.07 L1024.25,831.81 L1024.50,833.55 L1024.75,833.69 L1025.00,829.73 L1025.25,825.77 L1025.50,821.82 L1025.75,817.86 L1026.00,813.90 L1026.25,809.94 L1026.50,805.98 L1026.75,802.02 L1027.00,798.06 L1027.25,794.11 L1027.50,790.15 L1027.75,786.19 L1028.00,782.23 L1028.25,778.27 L1028.50,774.31 L1028.75,770.36 L1029.00,766.40 L1029.25,762.44 L1029.50,758.48 L1029.75,754.52 L1030.00,750.56 L1030.25,746.60 L1030.50,742.65 L1030.75,738.69 L1031.00,734.73 L1031.25,730.77 L1031.50,726.81 L1031.75,722.85 L1032.00,718.89 L1032.25,714.94 L1032.50,710.98 L1032.75,707.02 L1033.00,703.06 L1033.25,699.10 L1033.50,695.22 L1033.75,691.72 L1034.00,688.64 L1034.25,685.98 L1034.50,683.74 L1034.75,681.92 L1035.00,680.51 L1035.25,679.53 L1035.50,678.96 L1035.75,678.81 L1036.00,679.09 L1036.25,679.78 L1036.50,680.89 L1036.75,682.41 L1037.00,684.15 L1037.25,685.89 L1037.50,687.62 L1037.75,689.36 L1038.00,691.10 L1038.25,692.84 L1038.50,694.57 L1038.75,696.31 L1039.00,698.05 L1039.25,699.78 L1039.50,701.52 L1039.75,703.26 L1040.00,705.00 L1040.25,706.73 L1040.50,708.47 L1040.75,710.21 L1041.00,711.95 L1041.25,713.68 L1041.50,715.42 L1041.75,717.16 L1042.00,718.89 L1042.25,720.63 L1042.50,722.37 L1042.75,724.11 L1043.00,725.84 L1043.25,727.58 L1043.50,729.32 L1043.75,731.05 L1044.00,732.79 L1044.25,734.53 L1044.50,736.27 L1044.75,738.00 L1045.00,739.74 L1045.25,741.48 L1045.50,743.21 L1045.75,744.95 L1046.00,746.69 L1046.25,748.43 L1046.50,750.16 L1046.75,751.90 L1047.00,753.64 L1047.25,755.38 L1047.50,757.11 L1047.75,758.85 L1048.00,760.59 L1048.25,762.32 L1048.50,764.06 L1048.75,765.80 L1049.00,767.54 L1049.25,769.27 L1049.50,771.01 L1049.75,772.75 L1050.00,774.48 L1050.25,776.22 L1050.50,777.96 L1050.75,779.70 L1051.00,781.43 L1051.25,783.17 L1051.50,784.91 L1051.75,786.64 L1052.00,788.38 L1052.25,790.12 L1052.50,791.86 L1052.75,793.59 L1053.00,795.33 L1053.25,797.07 L1053.50,798.81 L1053.75,800.54 L1054.00,802.28 L1054.25,804.02 L1054.50,805.75 L1054.75,807.49 L1055.00,809.23 L1055.25,810.97 L1055.50,812.70 L1055.75,814.44 L1056.00,816.18 L1056.25,817.91 L1056.50,819.65 L1056.75,821.39 L1057.00,823.13 L1057.25,824.86 L1057.50,826.60 L1057.75,828.34 L1058.00,830.07 L1058.25,831.81 L1058.50,833.55 L1058.75,833.69 L1059.00,829.73 L1059.25,825.77 L1059.50,821.82 L1059.75,817.86 L1060.00,813.90 L1060.25,809.94 L1060.50,805.98 L1060.75,802.02 L1061.00,798.06 L1061.25,794.11 L1061.50,790.15 L1061.75,786.19 L1062.00,782.23 L1062.25,778.27 L1062.50,774.31 L1062.75,770.36 L1063.00,766.40 L1063.25,762.44 L1063.50,758.48 L1063.75,754.52 L1064.00,750.56 L1064.25,746.60 L1064.50,742.65 L1064.75,738.69 L1065.00,734.73 L1065.25,730.77 L1065.50,726.81 L1065.75,722.85 L1066.00,718.89 L1066.25,714.94 L1066.50,710.98 L1066.75,707.02 L1067.00,703.06 L1067.25,699.10 L1067.50,695.22 L1067.75,691.72 L1068.00,688.64 L1068.25,685.98 L1068.50,683.74 L1068.75,681.92 L1069.00,680.51 L1069.25,679.53 L1069.50,678.96 L1069.75,678.81 L1070.00,679.09 L1070.25,679.78 L1070.50,680.89 L1070.75,682.41 L1071.00,684.15 L1071.25,685.89 L1071.50,687.62 L1071.75,689.36 L1072.00,691.10 L1072.25,692.84 L1072.50,694.57 L1072.75,696.31 L1073.00,698.05 L1073.25,699.78 L1073.50,701.52 L1073.75,703.26 L1074.00,705.00 L1074.25,706.73 L1074.50,708.47 L1074.75,710.21 L1075.00,711.95 L1075.25,713.68 L1075.50,715.42 L1075.75,717.16 L1076.00,718.89 L1076.25,720.63 L1076.50,722.37 L1076.75,724.11 L1077.00,725.84 L1077.25,727.58 L1077.50,729.32 L1077.75,731.05 L1078.00,732.79 L1078.25,734.53 L1078.50,736.27 L1078.75,738.00 L1079.00,739.74 L1079.25,741.48 L1079.50,743.21 L1079.75,744.95 L1080.00,746.69 L1080.25,748.43 L1080.50,750.16 L1080.75,751.90 L1081.00,753.64 L1081.25,755.38 L1081.50,757.11 L1081.75,758.85 L1082.00,760.59 L1082.25,762.32 L1082.50,764.06 L1082.75,765.80 L1083.00,767.54 L1083.25,769.27 L1083.50,771.01 L1083.75,772.75 L1084.00,774.48 L1084.25,776.22 L1084.50,777.96 L1084.75,779.70 L1085.00,781.43 L1085.25,783.17 L1085.50,784.91 L1085.75,786.64 L1086.00,788.38 L1086.25,790.12 L1086.50,791.86 L1086.75,793.59 L1087.00,795.33 L1087.25,797.07 L1087.50,798.81 L1087.75,800.54 L1088.00,802.28 L1088.25,804.02 L1088.50,805.75 L1088.75,807.49 L1089.00,809.23 L1089.25,810.97 L1089.50,812.70 L1089.75,814.44 L1090.00,816.18 L1090.25,817.91 L1090.50,819.65 L1090.75,821.39 L1091.00,823.13 L1091.25,824.86 L1091.50,826.60 L1091.75,828.34 L1092.00,830.07 L1092.25,831.81 L1092.50,833.55 L1092.75,833.69 L1093.00,829.73 L1093.25,825.77 L1093.50,821.82 L1093.75,817.86 L1094.00,813.90 L1094.25,809.94 L1094.50,805.98 L1094.75,802.02 L1095.00,798.06 L1095.25,794.11 L1095.50,790.15 L1095.75,786.19 L1096.00,782.23 L1096.25,778.27 L1096.50,774.31 L1096.75,770.36 L1097.00,766.40 L1097.25,762.44 L1097.50,758.48 L1097.75,754.52 L1098.00,750.56 L1098.25,746.60 L1098.50,742.65 L1098.75,738.69 L1099.00,734.73 L1099.25,730.77 L1099.50,726.81 L1099.75,722.85 L1100.00,718.89 L1100.25,714.94 L1100.50,710.98 L1100.75,707.02 L1101.00,703.06 L1101.25,699.10 L1101.50,695.22 L1101.75,691.72 L1102.00,688.64 L1102.25,685.98 L1102.50,683.74 L1102.75,681.92 L1103.00,680.51 L1103.25,679.53 L1103.50,678.96 L1103.75,678.81 L1104.00,679.09 L1104.25,679.78 L1104.50,680.89 L1104.75,682.41 L1105.00,684.15 L1105.25,685.89 L1105.50,687.62 L1105.75,689.36 L1106.00,691.10 L1106.25,692.84 L1106.50,694.57 L1106.75,696.31 L1107.00,698.05 L1107.25,699.78 L1107.50,701.52 L1107.75,703.26 L1108.00,705.00 L1108.25,706.73 L1108.50,708.47 L1108.75,710.21 L1109.00,711.95 L1109.25,713.68 L1109.50,715.42 L1109.75,717.16 L1110.00,718.89 L1110.25,720.63 L1110.50,722.37 L1110.75,724.11 L1111.00,725.84 L1111.25,727.58 L1111.50,729.32 L1111.75,731.05 L1112.00,732.79 L1112.25,734.53 L1112.50,736.27 L1112.75,738.00 L1113.00,739.74 L1113.25,741.48 L1113.50,743.21 L1113.75,744.95 L1114.00,746.69 L1114.25,748.43 L1114.50,750.16 L1114.75,751.90 L1115.00,753.64 L1115.25,755.38 L1115.50,757.11 L1115.75,758.85 L1116.00,760.59 L1116.25,762.32 L1116.50,764.06 L1116.75,765.80 L1117.00,767.54 L1117.25,769.27 L1117.50,771.01 L1117.75,772.75 L1118.00,774.48 L1118.25,776.22 L1118.50,777.96 L1118.75,779.70 L1119.00,781.43 L1119.25,783.17 L1119.50,784.91 L1119.75,786.64 L1120.00,788.38 L1120.25,790.12 L1120.50,791.86 L1120.75,793.59 L1121.00,795.33 L1121.25,797.07 L1121.50,798.81 L1121.75,800.54 L1122.00,802.28 L1122.25,804.02 L1122.50,805.75 L1122.75,807.49 L1123.00,809.23 L1123.25,810.97 L1123.50,812.70 L1123.75,814.44 L1124.00,816.18 L1124.25,817.91 L1124.50,819.65 L1124.75,821.39 L1125.00,823.13 L1125.25,824.86 L1125.50,826.60 L1125.75,828.34 L1126.00,830.07 L1126.25,831.81 L1126.50,833.55 L1126.75,833.69 L1127.00,829.73 L1127.25,825.77 L1127.50,821.82 L1127.75,817.86 L1128.00,813.90 L1128.25,809.94 L1128.50,805.98 L1128.75,802.02 L1129.00,798.06 L1129.25,794.11 L1129.50,790.15 L1129.75,786.19 L1130.00,782.23 L1130.25,778.27 L1130.50,774.31 L1130.75,770.36 L1131.00,766.40 L1131.25,762.44 L1131.50,758.48 L1131.75,754.52 L1132.00,750.56 L1132.25,746.60 L1132.50,742.65 L1132.75,738.69 L1133.00,734.73 L1133.25,730.77 L1133.50,726.81 L1133.75,722.85 L1134.00,718.89 L1134.25,714.94 L1134.50,710.98 L1134.75,707.02 L1135.00,703.06 L1135.25,699.10 L1135.50,695.22 L1135.75,691.72 L1136.00,688.64 L1136.25,685.98 L1136.50,683.74 L1136.75,681.92 L1137.00,680.51 L1137.25,679.53 L1137.50,678.96 L1137.75,678.81 L1138.00,679.09 L1138.25,679.78 L1138.50,680.89 L1138.75,682.41 L1139.00,684.15 L1139.25,685.89 L1139.50,687.62 L1139.75,689.36 L1140.00,691.10 L1140.25,692.84 L1140.50,694.57 L1140.75,696.31 L1141.00,698.05 L1141.25,699.78 L1141.50,701.52 L1141.75,703.26 L1142.00,705.00 L1142.25,706.73 L1142.50,708.47 L1142.75,710.21 L1143.00,711.95 L1143.25,713.68 L1143.50,715.42 L1143.75,717.16 L1144.00,718.89 L1144.25,720.63 L1144.50,722.37 L1144.75,724.11 L1145.00,725.84 L1145.25,727.58 L1145.50,729.32 L1145.75,731.05 L1146.00,732.79 L1146.25,734.53 L1146.50,736.27 L1146.75,738.00 L1147.00,739.74 L1147.25,741.48 L1147.50,743.21 L1147.75,744.95 L1148.00,746.69 L1148.25,748.43 L1148.50,750.16 L1148.75,751.90 L1149.00,753.64 L1149.25,755.38 L1149.50,757.11 L1149.75,758.85 L1150.00,760.59 L1150.25,762.32 L1150.50,764.06 L1150.75,765.80 L1151.00,767.54 L1151.25,769.27 L1151.50,771.01 L1151.75,772.75 L1152.00,774.48 L1152.25,776.22 L1152.50,777.96 L1152.75,779.70 L1153.00,781.43 L1153.25,783.17 L1153.50,784.91 L1153.75,786.64 L1154.00,788.38 L1154.25,790.12 L1154.50,791.86 L1154.75,793.59 L1155.00,795.33 L1155.25,797.07 L1155.50,798.81 L1155.75,800.54 L1156.00,802.28 L1156.25,804.02 L1156.50,805.75 L1156.75,807.49 L1157.00,809.23 L1157.25,810.97 L1157.50,812.70 L1157.75,814.44 L1158.00,816.18 L1158.25,817.91 L1158.50,819.65 L1158.75,821.39 L1159.00,823.13 L1159.25,824.86 L1159.50,826.60 L1159.75,828.34 L1160.00,830.07 L1160.25,831.81 L1160.50,833.55 L1160.75,833.69 L1161.00,829.73 L1161.25,825.77 L1161.50,821.82 L1161.75,817.86 L1162.00,813.90 L1162.25,809.94 L1162.50,805.98 L1162.75,802.02 L1163.00,798.06 L1163.25,794.11 L1163.50,790.15 L1163.75,786.19 L1164.00,782.23 L1164.25,778.27 L1164.50,774.31 L1164.75,770.36 L1165.00,766.40 L1165.25,762.44 L1165.50,758.48 L1165.75,754.52 L1166.00,750.56 L1166.25,746.60 L1166.50,742.65 L1166.75,738.69 L1167.00,734.73 L1167.25,730.77 L1167.50,726.81 L1167.75,722.85 L1168.00,718.89 L1168.25,714.94 L1168.50,710.98 L1168.75,707.02 L1169.00,703.06 L1169.25,699.10 L1169.50,695.22 L1169.75,691.72 L1170.00,688.64 L1170.25,685.98 L1170.50,683.74 L1170.75,681.92 L1171.00,680.51 L1171.25,679.53 L1171.50,678.96 L1171.75,678.81 L1172.00,679.09 L1172.25,679.78 L1172.50,680.89 L1172.75,682.41 L1173.00,684.15 L1173.25,685.89 L1173.50,687.62 L1173.75,689.36 L1174.00,691.10 L1174.25,692.84 L1174.50,694.57 L1174.75,696.31 L1175.00,698.05 L1175.25,699.78 L1175.50,701.52 L1175.75,703.26 L1176.00,705.00 L1176.25,706.73 L1176.50,708.47 L1176.75,710.21 L1177.00,711.95 L1177.25,713.68 L1177.50,715.42 L1177.75,717.16 L1178.00,718.89 L1178.25,720.63 L1178.50,722.37 L1178.75,724.11 L1179.00,725.84 L1179.25,727.58 L1179.50,729.32 L1179.75,731.05 L1180.00,732.79 L1180.25,734.53 L1180.50,736.27 L1180.75,738.00 L1181.00,739.74 L1181.25,741.48 L1181.50,743.21 L1181.75,744.95 L1182.00,746.69 L1182.25,748.43 L1182.50,750.16 L1182.75,751.90 L1183.00,753.64 L1183.25,755.38 L1183.50,757.11 L1183.75,758.85 L1184.00,760.59 L1184.25,762.32 L1184.50,764.06 L1184.75,765.80 L1185.00,767.54 L1185.25,769.27 L1185.50,771.01 L1185.75,772.75 L1186.00,774.48 L1186.25,776.22 L1186.50,777.96 L1186.75,779.70 L1187.00,781.43 L1187.25,783.17 L1187.50,784.91 L1187.75,786.64 L1188.00,788.38 L1188.25,790.12 L1188.50,791.86 L1188.75,793.59 L1189.00,795.33 L1189.25,797.07 L1189.50,798.81 L1189.75,800.54 L1190.00,802.28 L1190.25,804.02 L1190.50,805.75 L1190.75,807.49 L1191.00,809.23 L1191.25,810.97 L1191.50,812.70 L1191.75,814.44 L1192.00,816.18 L1192.25,817.91 L1192.50,819.65 L1192.75,821.39 L1193.00,823.13 L1193.25,824.86 L1193.50,826.60 L1193.75,828.34 L1194.00,830.07 L1194.25,831.81 L1194.50,833.55 L1194.75,833.69 L1195.00,829.73 L1195.25,825.77 L1195.50,821.82 L1195.75,817.86 L1196.00,813.90 L1196.25,809.94 L1196.50,805.98 L1196.75,802.02 L1197.00,798.06 L1197.25,794.11 L1197.50,790.15 L1197.75,786.19 L1198.00,782.23 L1198.25,778.27 L1198.50,774.31 L1198.75,770.36 L1199.00,766.40 L1199.25,762.44 L1199.50,758.48 L1199.75,754.52 L1200.00,750.56 L1200.25,746.60 L1200.50,742.65 L1200.75,738.69 L1201.00,734.73 L1201.25,730.77 L1201.50,726.81 L1201.75,722.85 L1202.00,718.89 L1202.25,714.94 L1202.50,710.98 L1202.75,707.02 L1203.00,703.06 L1203.25,699.10 L1203.50,695.22 L1203.75,691.72 L1204.00,688.64 L1204.25,685.98 L1204.50,683.74 L1204.75,681.92 L1205.00,680.51 L1205.25,679.53 L1205.50,678.96 L1205.75,678.81 L1206.00,679.09 L1206.25,679.78 L1206.50,680.89 L1206.75,682.41 L1207.00,684.15 L1207.25,685.89 L1207.50,687.62 L1207.75,689.36 L1208.00,691.10 L1208.25,692.84 L1208.50,694.57 L1208.75,696.31 L1209.00,698.05 L1209.25,699.78 L1209.50,701.52 L1209.75,703.26 L1210.00,705.00 L1210.25,706.73 L1210.50,708.47 L1210.75,710.21 L1211.00,711.95 L1211.25,713.68 L1211.50,715.42 L1211.75,717.16 L1212.00,718.89 L1212.25,720.63 L1212.50,722.37 L1212.75,724.11 L1213.00,725.84 L1213.25,727.58 L1213.50,729.32 L1213.75,731.05 L1214.00,732.79 L1214.25,734.53 L1214.50,736.27 L1214.75,738.00 L1215.00,739.74 L1215.25,741.48 L1215.50,743.21 L1215.75,744.95 L1216.00,746.69 L1216.25,748.43 L1216.50,750.16 L1216.75,751.90 L1217.00,753.64 L1217.25,755.38 L1217.50,757.11 L1217.75,758.85 L1218.00,760.59 L1218.25,762.32 L1218.50,764.06 L1218.75,765.80 L1219.00,767.54 L1219.25,769.27 L1219.50,771.01 L1219.75,772.75 L1220.00,774.48 L1220.25,776.22 L1220.50,777.96 L1220.75,779.70 L1221.00,781.43 L1221.25,783.17 L1221.50,784.91 L1221.75,786.64 L1222.00,788.38 L1222.25,790.12 L1222.50,791.86 L1222.75,793.59 L1223.00,795.33 L1223.25,797.07 L1223.50,798.81 L1223.75,800.54 L1224.00,802.28 L1224.25,804.02 L1224.50,805.75 L1224.75,807.49 L1225.00,809.23 L1225.25,810.97 L1225.50,812.70 L1225.75,814.44 L1226.00,816.18 L1226.25,817.91 L1226.50,819.65 L1226.75,821.39 L1227.00,823.13 L1227.25,824.86 L1227.50,826.60 L1227.75,828.34 L1228.00,830.07 L1228.25,831.81 L1228.50,833.55 L1228.75,833.69 L1229.00,829.73 L1229.25,825.77 L1229.50,821.82 L1229.75,817.86 L1230.00,813.90 L1230.25,809.94 L1230.50,805.98 L1230.75,802.02 L1231.00,798.06 L1231.25,794.11 L1231.50,790.15 L1231.75,786.19 L1232.00,782.23 L1232.25,778.27 L1232.50,774.31 L1232.75,770.36 L1233.00,766.40 L1233.25,762.44 L1233.50,758.48 L1233.75,754.52 L1234.00,750.56 L1234.25,746.60 L1234.50,742.65 L1234.75,738.69 L1235.00,734.73 L1235.25,730.77 L1235.50,726.81 L1235.75,722.85 L1236.00,718.89 L1236.25,714.94 L1236.50,710.98 L1236.75,707.02 L1237.00,703.06 L1237.25,699.10 L1237.50,695.22 L1237.75,691.72 L1238.00,688.64 L1238.25,685.98 L1238.50,683.74 L1238.75,681.92 L1239.00,680.51 L1239.25,679.53 L1239.50,678.96 L1239.75,678.81 L1240.00,679.09 L1240.25,679.78 L1240.50,680.89 L1240.75,682.41 L1241.00,684.15 L1241.25,685.89 L1241.50,687.62 L1241.75,689.36 L1242.00,691.10 L1242.25,692.84 L1242.50,694.57 L1242.75,696.31 L1243.00,698.05 L1243.25,699.78 L1243.50,701.52 L1243.75,703.26 L1244.00,705.00 L1244.25,706.73 L1244.50,708.47 L1244.75,710.21 L1245.00,711.95 L1245.25,713.68 L1245.50,715.42 L1245.75,717.16 L1246.00,718.89 L1246.25,720.63 L1246.50,722.37 L1246.75,724.11 L1247.00,725.84 L1247.25,727.58 L1247.50,729.32 L1247.75,731.05 L1248.00,732.79 L1248.25,734.53 L1248.50,736.27 L1248.75,738.00 L1249.00,739.74 L1249.25,741.48 L1249.50,743.21 L1249.75,744.95 L1250.00,746.69 L1250.25,748.43 L1250.50,750.16 L1250.75,751.90 L1251.00,753.64 L1251.25,755.38 L1251.50,757.11 L1251.75,758.85 L1252.00,760.59 L1252.25,762.32 L1252.50,764.06 L1252.75,765.80 L1253.00,767.54 L1253.25,769.27 L1253.50,771.01 L1253.75,772.75 L1254.00,774.48 L1254.25,776.22 L1254.50,777.96 L1254.75,779.70 L1255.00,781.43 L1255.25,783.17 L1255.50,784.91 L1255.75,786.64 L1256.00,788.38 L1256.25,790.12 L1256.50,791.86 L1256.75,793.59 L1257.00,795.33 L1257.25,797.07 L1257.50,798.81 L1257.75,800.54 L1258.00,802.28 L1258.25,804.02 L1258.50,805.75 L1258.75,807.49 L1259.00,809.23 L1259.25,810.97 L1259.50,812.70 L1259.75,814.44 L1260.00,816.18 L1260.25,817.91 L1260.50,819.65 L1260.75,821.39 L1261.00,823.13 L1261.25,824.86 L1261.50,826.60 L1261.75,828.34 L1262.00,830.07 L1262.25,831.81 L1262.50,833.55 L1262.75,833.69 L1263.00,829.73 L1263.25,825.77 L1263.50,821.82 L1263.75,817.86 L1264.00,813.90 L1264.25,809.94 L1264.50,805.98 L1264.75,802.02 L1265.00,798.06 L1265.25,794.11 L1265.50,790.15 L1265.75,786.19 L1266.00,782.23 L1266.25,778.27 L1266.50,774.31 L1266.75,770.36 L1267.00,766.40 L1267.25,762.44 L1267.50,758.48 L1267.75,754.52 L1268.00,750.56 L1268.25,746.60 L1268.50,742.65 L1268.75,738.69 L1269.00,734.73 L1269.25,730.77 L1269.50,726.81 L1269.75,722.85 L1270.00,718.89 L1270.25,714.94 L1270.50,710.98 L1270.75,707.02 L1271.00,703.06 L1271.25,699.10 L1271.50,695.22 L1271.75,691.72 L1272.00,688.64 L1272.25,685.98 L1272.50,683.74 L1272.75,681.92 L1273.00,680.51 L1273.25,679.53 L1273.50,678.96 L1273.75,678.81 L1274.00,679.09 L1274.25,679.78 L1274.50,680.89 L1274.75,682.41 L1275.00,684.15 L1275.25,685.89 L1275.50,687.62 L1275.75,689.36 L1276.00,691.10 L1276.25,692.84 L1276.50,694.57 L1276.75,696.31 L1277.00,698.05 L1277.25,699.78 L1277.50,701.52 L1277.75,703.26 L1278.00,705.00 L1278.25,706.73 L1278.50,708.47 L1278.75,710.21 L1279.00,711.95 L1279.25,713.68 L1279.50,715.42 L1279.75,717.16 L1280.00,718.89 L1280.25,720.63 L1280.50,722.37 L1280.75,724.11 L1281.00,725.84 L1281.25,727.58 L1281.50,729.32 L1281.75,731.05 L1282.00,732.79 L1282.25,734.53 L1282.50,736.27 L1282.75,738.00 L1283.00,739.74 L1283.25,741.48 L1283.50,743.21 L1283.75,744.95 L1284.00,746.69 L1284.25,748.43 L1284.50,750.16 L1284.75,751.90 L1285.00,753.64 L1285.25,755.38 L1285.50,757.11 L1285.75,758.85 L1286.00,760.59 L1286.25,762.32 L1286.50,764.06 L1286.75,765.80 L1287.00,767.54 L1287.25,769.27 L1287.50,771.01 L1287.75,772.75 L1288.00,774.48 L1288.25,776.22 L1288.50,777.96 L1288.75,779.70 L1289.00,781.43 L1289.25,783.17 L1289.50,784.91 L1289.75,786.64 L1290.00,788.38 L1290.25,790.12 L1290.50,791.86 L1290.75,793.59 L1291.00,795.33 L1291.25,797.07 L1291.50,798.81 L1291.75,800.54 L1292.00,802.28 L1292.25,804.02 L1292.50,805.75 L1292.75,807.49 L1293.00,809.23 L1293.25,810.97 L1293.50,812.70 L1293.75,814.44 L1294.00,816.18 L1294.25,817.91 L1294.50,819.65 L1294.75,821.39 L1295.00,823.13 L1295.25,824.86 L1295.50,826.60 L1295.75,828.34 L1296.00,830.07 L1296.25,831.81 L1296.50,833.55 L1296.75,833.69 L1297.00,829.73 L1297.25,825.77 L1297.50,821.82 L1297.75,817.86 L1298.00,813.90 L1298.25,809.94 L1298.50,805.98 L1298.75,802.02 L1299.00,798.06 L1299.25,794.11 L1299.50,790.15 L1299.75,786.19 L1300.00,782.23 L1300.25,778.27 L1300.50,774.31 L1300.75,770.36 L1301.00,766.40 L1301.25,762.44 L1301.50,758.48 L1301.75,754.52 L1302.00,750.56 L1302.25,746.60 L1302.50,742.65 L1302.75,738.69 L1303.00,734.73 L1303.25,730.77 L1303.50,726.81 L1303.75,722.85 L1304.00,718.89 L1304.25,714.94 L1304.50,710.98 L1304.75,707.02 L1305.00,703.06 L1305.25,699.10 L1305.50,695.22 L1305.75,691.72 L1306.00,688.64 L1306.25,685.98 L1306.50,683.74 L1306.75,681.92 L1307.00,680.51 L1307.25,679.53 L1307.50,678.96 L1307.75,678.81 L1308.00,679.09 L1308.25,679.78 L1308.50,680.89 L1308.75,682.41 L1309.00,684.15 L1309.25,685.89 L1309.50,687.62 L1309.75,689.36 L1310.00,691.10 L1310.25,692.84 L1310.50,694.57 L1310.75,696.31 L1311.00,698.05 L1311.25,699.78 L1311.50,701.52 L1311.75,703.26 L1312.00,705.00 L1312.25,706.73 L1312.50,708.47 L1312.75,710.21 L1313.00,711.95 L1313.25,713.68 L1313.50,715.42 L1313.75,717.16 L1314.00,718.89 L1314.25,720.63 L1314.50,722.37 L1314.75,724.11 L1315.00,725.84 L1315.25,727.58 L1315.50,729.32 L1315.75,731.05 L1316.00,732.79 L1316.25,734.53 L1316.50,736.27 L1316.75,738.00 L1317.00,739.74 L1317.25,741.48 L1317.50,743.21 L1317.75,744.95 L1318.00,746.69 L1318.25,748.43 L1318.50,750.16 L1318.75,751.90 L1319.00,753.64 L1319.25,755.38 L1319.50,757.11 L1319.75,758.85 L1320.00,760.59 L1320.25,762.32 L1320.50,764.06 L1320.75,765.80 L1321.00,767.54 L1321.25,769.27 L1321.50,771.01 L1321.75,772.75 L1322.00,774.48 L1322.25,776.22 L1322.50,777.96 L1322.75,779.70 L1323.00,781.43 L1323.25,783.17 L1323.50,784.91 L1323.75,786.64 L1324.00,788.38 L1324.25,790.12 L1324.50,791.86 L1324.75,793.59 L1325.00,795.33 L1325.25,797.07 L1325.50,798.81 L1325.75,800.54 L1326.00,802.28 L1326.25,804.02 L1326.50,805.75 L1326.75,807.49 L1327.00,809.23 L1327.25,810.97 L1327.50,812.70 L1327.75,814.44 L1328.00,816.18 L1328.25,817.91 L1328.50,819.65 L1328.75,821.39 L1329.00,823.13 L1329.25,824.86 L1329.50,826.60 L1329.75,828.34 L1330.00,830.07 L1330.25,831.81 L1330.50,833.55 L1330.75,833.69 L1331.00,829.73 L1331.25,825.77 L1331.50,821.82 L1331.75,817.86 L1332.00,813.90 L1332.25,809.94 L1332.50,805.98 L1332.75,802.02 L1333.00,798.06 L1333.25,794.11 L1333.50,790.15 L1333.75,786.19 L1334.00,782.23 L1334.25,778.27 L1334.50,774.31 L1334.75,770.36 L1335.00,766.40 L1335.25,762.44 L1335.50,758.48 L1335.75,754.52 L1336.00,750.56 L1336.25,746.60 L1336.50,742.65 L1336.75,738.69 L1337.00,734.73 L1337.25,730.77 L1337.50,726.81 L1337.75,722.85 L1338.00,718.89 L1338.25,714.94 L1338.50,710.98 L1338.75,707.02 L1339.00,703.06 L1339.25,699.10 L1339.50,695.22 L1339.75,691.72 L1340.00,688.64 L1340.25,685.98 L1340.50,683.74 L1340.75,681.92 L1341.00,680.51 L1341.25,679.53 L1341.50,678.96 L1341.75,678.81 L1342.00,679.09 L1342.25,679.78 L1342.50,680.89 L1342.75,682.41 L1343.00,684.15 L1343.25,685.89 L1343.50,687.62 L1343.75,689.36 L1344.00,691.10 L1344.25,692.84 L1344.50,694.57 L1344.75,696.31 L1345.00,698.05 L1345.25,699.78 L1345.50,701.52 L1345.75,703.26 L1346.00,705.00 L1346.25,706.73 L1346.50,708.47 L1346.75,710.21 L1347.00,711.95 L1347.25,713.68 L1347.50,715.42 L1347.75,717.16 L1348.00,718.89 L1348.25,720.63 L1348.50,722.37 L1348.75,724.11 L1349.00,725.84 L1349.25,727.58 L1349.50,729.32 L1349.75,731.05 L1350.00,732.79 L1350.25,734.53 L1350.50,736.27 L1350.75,738.00 L1351.00,739.74 L1351.25,741.48 L1351.50,743.21 L1351.75,744.95 L1352.00,746.69 L1352.25,748.43 L1352.50,750.16 L1352.75,751.90 L1353.00,753.64 L1353.25,755.38 L1353.50,757.11 L1353.75,758.85 L1354.00,760.59 L1354.25,762.32 L1354.50,764.06 L1354.75,765.80 L1355.00,767.54 L1355.25,769.27 L1355.50,771.01" fill="none" stroke="#80d8f8" stroke-width="1.25" stroke-linejoin="round"/>
<path d="M1015.50,862.63 L1015.75,863.95 L1016.00,865.27 L1016.25,866.60 L1016.50,867.92 L1016.75,869.24 L1017.00,870.56 L1017.25,871.89 L1017.50,873.21 L1017.75,874.53 L1018.00,875.85 L1018.25,877.18 L1018.50,878.50 L1018.75,879.82 L1019.00,881.15 L1019.25,882.47 L1019.50,883.79 L1019.75,885.11 L1020.00,886.44 L1020.25,887.76 L1020.50,889.08 L1020.75,890.41 L1021.00,891.73 L1021.25,893.05 L1021.50,894.37 L1021.75,895.70 L1022.00,897.02 L1022.25,898.34 L1022.50,899.67 L1022.75,900.99 L1023.00,902.31 L1023.25,903.63 L1023.50,904.96 L1023.75,906.28 L1024.00,907.60 L1024.25,908.93 L1024.50,910.25 L1024.75,911.57 L1025.00,912.89 L1025.25,910.91 L1025.50,908.64 L1025.75,906.37 L1026.00,904.09 L1026.25,901.82 L1026.50,899.55 L1026.75,897.28 L1027.00,895.01 L1027.25,892.74 L1027.50,890.46 L1027.75,888.19 L1028.00,885.92 L1028.25,883.65 L1028.50,881.38 L1028.75,879.10 L1029.00,876.83 L1029.25,874.56 L1029.50,872.29 L1029.75,870.02 L1030.00,867.75 L1030.25,865.47 L1030.50,863.20 L1030.75,860.93 L1031.00,858.66 L1031.25,856.39 L1031.50,854.11 L1031.75,851.84 L1032.00,849.57 L1032.25,847.30 L1032.50,845.03 L1032.75,842.76 L1033.00,840.48 L1033.25,838.21 L1033.50,835.94 L1033.75,833.67 L1034.00,831.40 L1034.25,829.12 L1034.50,826.85 L1034.75,824.58 L1035.00,822.31 L1035.25,820.04 L1035.50,817.77 L1035.75,815.49 L1036.00,813.22 L1036.25,810.95 L1036.50,808.68 L1036.75,806.41 L1037.00,804.13 L1037.25,801.86 L1037.50,799.59 L1037.75,800.45 L1038.00,801.78 L1038.25,803.10 L1038.50,804.42 L1038.75,805.74 L1039.00,807.07 L1039.25,808.39 L1039.50,809.71 L1039.75,811.04 L1040.00,812.36 L1040.25,813.68 L1040.50,815.00 L1040.75,816.33 L1041.00,817.65 L1041.25,818.97 L1041.50,820.30 L1041.75,821.62 L1042.00,822.94 L1042.25,824.26 L1042.50,825.59 L1042.75,826.91 L1043.00,828.23 L1043.25,829.56 L1043.50,830.88 L1043.75,832.20 L1044.00,833.52 L1044.25,834.85 L1044.50,836.17 L1044.75,837.49 L1045.00,838.82 L1045.25,840.14 L1045.50,841.46 L1045.75,842.78 L1046.00,844.11 L1046.25,845.43 L1046.50,846.75 L1046.75,848.08 L1047.00,849.40 L1047.25,850.72 L1047.50,852.04 L1047.75,853.37 L1048.00,854.69 L1048.25,856.01 L1048.50,857.34 L1048.75,858.66 L1049.00,859.98 L1049.25,861.30 L1049.50,862.63 L1049.75,863.95 L1050.00,865.27 L1050.25,866.60 L1050.50,867.92 L1050.75,869.24 L1051.00,870.56 L1051.25,871.89 L1051.50,873.21 L1051.75,874.53 L1052.00,875.85 L1052.25,877.18 L1052.50,878.50 L1052.75,879.82 L1053.00,881.15 L1053.25,882.47 L1053.50,883.79 L1053.75,885.11 L1054.00,886.44 L1054.25,887.76 L1054.50,889.08 L1054.75,890.41 L1055.00,891.73 L1055.25,893.05 L1055.50,894.37 L1055.75,895.70 L1056.00,897.02 L1056.25,898.34 L1056.50,899.67 L1056.75,900.99 L1057.00,902.31 L1057.25,903.63 L1057.50,904.96 L1057.75,906.28 L1058.00,907.60 L1058.25,908.93 L1058.50,910.25 L1058.75,911.57 L1059.00,912.89 L1059.25,910.91 L1059.50,908.64 L1059.75,906.37 L1060.00,904.09 L1060.25,901.82 L1060.50,899.55 L1060.75,897.28 L1061.00,895.01 L1061.25,892.74 L1061.50,890.46 L1061.75,888.19 L1062.00,885.92 L1062.25,883.65 L1062.50,881.38 L1062.75,879.10 L1063.00,876.83 L1063.25,874.56 L1063.50,872.29 L1063.75,870.02 L1064.00,867.75 L1064.25,865.47 L1064.50,863.20 L1064.75,860.93 L1065.00,858.66 L1065.25,856.39 L1065.50,854.11 L1065.75,851.84 L1066.00,849.57 L1066.25,847.30 L1066.50,845.03 L1066.75,842.76 L1067.00,840.48 L1067.25,838.21 L1067.50,835.94 L1067.75,833.67 L1068.00,831.40 L1068.25,829.12 L1068.50,826.85 L1068.75,824.58 L1069.00,822.31 L1069.25,820.04 L1069.50,817.77 L1069.75,815.49 L1070.00,813.22 L1070.25,810.95 L1070.50,808.68 L1070.75,806.41 L1071.00,804.13 L1071.25,801.86 L1071.50,799.59 L1071.75,800.45 L1072.00,801.78 L1072.25,803.10 L1072.50,804.42 L1072.75,805.74 L1073.00,807.07 L1073.25,808.39 L1073.50,809.71 L1073.75,811.04 L1074.00,812.36 L1074.25,813.68 L1074.50,815.00 L1074.75,816.33 L1075.00,817.65 L1075.25,818.97 L1075.50,820.30 L1075.75,821.62 L1076.00,822.94 L1076.25,824.26 L1076.50,825.59 L1076.75,826.91 L1077.00,828.23 L1077.25,829.56 L1077.50,830.88 L1077.75,832.20 L1078.00,833.52 L1078.25,834.85 L1078.50,836.17 L1078.75,837.49 L1079.00,838.82 L1079.25,840.14 L1079.50,841.46 L1079.75,842.78 L1080.00,844.11 L1080.25,845.43 L1080.50,846.75 L1080.75,848.08 L1081.00,849.40 L1081.25,850.72 L1081.50,852.04 L1081.75,853.37 L1082.00,854.69 L1082.25,856.01 L1082.50,857.34 L1082.75,858.66 L1083.00,859.98 L1083.25,861.30 L1083.50,862.63 L1083.75,863.95 L1084.00,865.27 L1084.25,866.60 L1084.50,867.92 L1084.75,869.24 L1085.00,870.56 L1085.25,871.89 L1085.50,873.21 L1085.75,874.53 L1086.00,875.85 L1086.25,877.18 L1086.50,878.50 L1086.75,879.82 L1087.00,881.15 L1087.25,882.47 L1087.50,883.79 L1087.75,885.11 L1088.00,886.44 L1088.25,887.76 L1088.50,889.08 L1088.75,890.41 L1089.00,891.73 L1089.25,893.05 L1089.50,894.37 L1089.75,895.70 L1090.00,897.02 L1090.25,898.34 L1090.50,899.67 L1090.75,900.99 L1091.00,902.31 L1091.25,903.63 L1091.50,904.96 L1091.75,906.28 L1092.00,907.60 L1092.25,908.93 L1092.50,910.25 L1092.75,911.57 L1093.00,912.89 L1093.25,910.91 L1093.50,908.64 L1093.75,906.37 L1094.00,904.09 L1094.25,901.82 L1094.50,899.55 L1094.75,897.28 L1095.00,895.01 L1095.25,892.74 L1095.50,890.46 L1095.75,888.19 L1096.00,885.92 L1096.25,883.65 L1096.50,881.38 L1096.75,879.10 L1097.00,876.83 L1097.25,874.56 L1097.50,872.29 L1097.75,870.02 L1098.00,867.75 L1098.25,865.47 L1098.50,863.20 L1098.75,860.93 L1099.00,858.66 L1099.25,856.39 L1099.50,854.11 L1099.75,851.84 L1100.00,849.57 L1100.25,847.30 L1100.50,845.03 L1100.75,842.76 L1101.00,840.48 L1101.25,838.21 L1101.50,835.94 L1101.75,833.67 L1102.00,831.40 L1102.25,829.12 L1102.50,826.85 L1102.75,824.58 L1103.00,822.31 L1103.25,820.04 L1103.50,817.77 L1103.75,815.49 L1104.00,813.22 L1104.25,810.95 L1104.50,808.68 L1104.75,806.41 L1105.00,804.13 L1105.25,801.86 L1105.50,799.59 L1105.75,800.45 L1106.00,801.78 L1106.25,803.10 L1106.50,804.42 L1106.75,805.74 L1107.00,807.07 L1107.25,808.39 L1107.50,809.71 L1107.75,811.04 L1108.00,812.36 L1108.25,813.68 L1108.50,815.00 L1108.75,816.33 L1109.00,817.65 L1109.25,818.97 L1109.50,820.30 L1109.75,821.62 L1110.00,822.94 L1110.25,824.26 L1110.50,825.59 L1110.75,826.91 L1111.00,828.23 L1111.25,829.56 L1111.50,830.88 L1111.75,832.20 L1112.00,833.52 L1112.25,834.85 L1112.50,836.17 L1112.75,837.49 L1113.00,838.82 L1113.25,840.14 L1113.50,841.46 L1113.75,842.78 L1114.00,844.11 L1114.25,845.43 L1114.50,846.75 L1114.75,848.08 L1115.00,849.40 L1115.25,850.72 L1115.50,852.04 L1115.75,853.37 L1116.00,854.69 L1116.25,856.01 L1116.50,857.34 L1116.75,858.66 L1117.00,859.98 L1117.25,861.30 L1117.50,862.63 L1117.75,863.95 L1118.00,865.27 L1118.25,866.60 L1118.50,867.92 L1118.75,869.24 L1119.00,870.56 L1119.25,871.89 L1119.50,873.21 L1119.75,874.53 L1120.00,875.85 L1120.25,877.18 L1120.50,878.50 L1120.75,879.82 L1121.00,881.15 L1121.25,882.47 L1121.50,883.79 L1121.75,885.11 L1122.00,886.44 L1122.25,887.76 L1122.50,889.08 L1122.75,890.41 L1123.00,891.73 L1123.25,893.05 L1123.50,894.37 L1123.75,895.70 L1124.00,897.02 L1124.25,898.34 L1124.50,899.67 L1124.75,900.99 L1125.00,902.31 L1125.25,903.63 L1125.50,904.96 L1125.75,906.28 L1126.00,907.60 L1126.25,908.93 L1126.50,910.25 L1126.75,911.57 L1127.00,912.89 L1127.25,910.91 L1127.50,908.64 L1127.75,906.37 L1128.00,904.09 L1128.25,901.82 L1128.50,899.55 L1128.75,897.28 L1129.00,895.01 L1129.25,892.74 L1129.50,890.46 L1129.75,888.19 L1130.00,885.92 L1130.25,883.65 L1130.50,881.38 L1130.75,879.10 L1131.00,876.83 L1131.25,874.56 L1131.50,872.29 L1131.75,870.02 L1132.00,867.75 L1132.25,865.47 L1132.50,863.20 L1132.75,860.93 L1133.00,858.66 L1133.25,856.39 L1133.50,854.11 L1133.75,851.84 L1134.00,849.57 L1134.25,847.30 L1134.50,845.03 L1134.75,842.76 L1135.00,840.48 L1135.25,838.21 L1135.50,835.94 L1135.75,833.67 L1136.00,831.40 L1136.25,829.12 L1136.50,826.85 L1136.75,824.58 L1137.00,822.31 L1137.25,820.04 L1137.50,817.77 L1137.75,815.49 L1138.00,813.22 L1138.25,810.95 L1138.50,808.68 L1138.75,806.41 L1139.00,804.13 L1139.25,801.86 L1139.50,799.59 L1139.75,800.45 L1140.00,801.78 L1140.25,803.10 L1140.50,804.42 L1140.75,805.74 L1141.00,807.07 L1141.25,808.39 L1141.50,809.71 L1141.75,811.04 L1142.00,812.36 L1142.25,813.68 L1142.50,815.00 L1142.75,816.33 L1143.00,817.65 L1143.25,818.97 L1143.50,820.30 L1143.75,821.62 L1144.00,822.94 L1144.25,824.26 L1144.50,825.59 L1144.75,826.91 L1145.00,828.23 L1145.25,829.56 L1145.50,830.88 L1145.75,832.20 L1146.00,833.52 L1146.25,834.85 L1146.50,836.17 L1146.75,837.49 L1147.00,838.82 L1147.25,840.14 L1147.50,841.46 L1147.75,842.78 L1148.00,844.11 L1148.25,845.43 L1148.50,846.75 L1148.75,848.08 L1149.00,849.40 L1149.25,850.72 L1149.50,852.04 L1149.75,853.37 L1150.00,854.69 L1150.25,856.01 L1150.50,857.34 L1150.75,858.66 L1151.00,859.98 L1151.25,861.30 L1151.50,862.63 L1151.75,863.95 L1152.00,865.27 L1152.25,866.60 L1152.50,867.92 L1152.75,869.24 L1153.00,870.56 L1153.25,871.89 L1153.50,873.21 L1153.75,874.53 L1154.00,875.85 L1154.25,877.18 L1154.50,878.50 L1154.75,879.82 L1155.00,881.15 L1155.25,882.47 L1155.50,883.79 L1155.75,885.11 L1156.00,886.44 L1156.25,887.76 L1156.50,889.08 L1156.75,890.41 L1157.00,891.73 L1157.25,893.05 L1157.50,894.37 L1157.75,895.70 L1158.00,897.02 L1158.25,898.34 L1158.50,899.67 L1158.75,900.99 L1159.00,902.31 L1159.25,903.63 L1159.50,904.96 L1159.75,906.28 L1160.00,907.60 L1160.25,908.93 L1160.50,910.25 L1160.75,911.57 L1161.00,912.89 L1161.25,910.91 L1161.50,908.64 L1161.75,906.37 L1162.00,904.09 L1162.25,901.82 L1162.50,899.55 L1162.75,897.28 L1163.00,895.01 L1163.25,892.74 L1163.50,890.46 L1163.75,888.19 L1164.00,885.92 L1164.25,883.65 L1164.50,881.38 L1164.75,879.10 L1165.00,876.83 L1165.25,874.56 L1165.50,872.29 L1165.75,870.02 L1166.00,867.75 L1166.25,865.47 L1166.50,863.20 L1166.75,860.93 L1167.00,858.66 L1167.25,856.39 L1167.50,854.11 L1167.75,851.84 L1168.00,849.57 L1168.25,847.30 L1168.50,845.03 L1168.75,842.76 L1169.00,840.48 L1169.25,838.21 L1169.50,835.94 L1169.75,833.67 L1170.00,831.40 L1170.25,829.12 L1170.50,826.85 L1170.75,824.58 L1171.00,822.31 L1171.25,820.04 L1171.50,817.77 L1171.75,815.49 L1172.00,813.22 L1172.25,810.95 L1172.50,808.68 L1172.75,806.41 L1173.00,804.13 L1173.25,801.86 L1173.50,799.59 L1173.75,800.45 L1174.00,801.78 L1174.25,803.10 L1174.50,804.42 L1174.75,805.74 L1175.00,807.07 L1175.25,808.39 L1175.50,809.71 L1175.75,811.04 L1176.00,812.36 L1176.25,813.68 L1176.50,815.00 L1176.75,816.33 L1177.00,817.65 L1177.25,818.97 L1177.50,820.30 L1177.75,821.62 L1178.00,822.94 L1178.25,824.26 L1178.50,825.59 L1178.75,826.91 L1179.00,828.23 L1179.25,829.56 L1179.50,830.88 L1179.75,832.20 L1180.00,833.52 L1180.25,834.85 L1180.50,836.17 L1180.75,837.49 L1181.00,838.82 L1181.25,840.14 L1181.50,841.46 L1181.75,842.78 L1182.00,844.11 L1182.25,845.43 L1182.50,846.75 L1182.75,848.08 L1183.00,849.40 L1183.25,850.72 L1183.50,852.04 L1183.75,853.37 L1184.00,854.69 L1184.25,856.01 L1184.50,857.34 L1184.75,858.66 L1185.00,859.98 L1185.25,861.30 L1185.50,862.63 L1185.75,863.95 L1186.00,865.27 L1186.25,866.60 L1186.50,867.92 L1186.75,869.24 L1187.00,870.56 L1187.25,871.89 L1187.50,873.21 L1187.75,874.53 L1188.00,875.85 L1188.25,877.18 L1188.50,878.50 L1188.75,879.82 L1189.00,881.15 L1189.25,882.47 L1189.50,883.79 L1189.75,885.11 L1190.00,886.44 L1190.25,887.76 L1190.50,889.08 L1190.75,890.41 L1191.00,891.73 L1191.25,893.05 L1191.50,894.37 L1191.75,895.70 L1192.00,897.02 L1192.25,898.34 L1192.50,899.67 L1192.75,900.99 L1193.00,902.31 L1193.25,903.63 L1193.50,904.96 L1193.75,906.28 L1194.00,907.60 L1194.25,908.93 L1194.50,910.25 L1194.75,911.57 L1195.00,912.89 L1195.25,910.91 L1195.50,908.64 L1195.75,906.37 L1196.00,904.09 L1196.25,901.82 L1196.50,899.55 L1196.75,897.28 L1197.00,895.01 L1197.25,892.74 L1197.50,890.46 L1197.75,888.19 L1198.00,885.92 L1198.25,883.65 L1198.50,881.38 L1198.75,879.10 L1199.00,876.83 L1199.25,874.56 L1199.50,872.29 L1199.75,870.02 L1200.00,867.75 L1200.25,865.47 L1200.50,863.20 L1200.75,860.93 L1201.00,858.66 L1201.25,856.39 L1201.50,854.11 L1201.75,851.84 L1202.00,849.57 L1202.25,847.30 L1202.50,845.03 L1202.75,842.76 L1203.00,840.48 L1203.25,838.21 L1203.50,835.94 L1203.75,833.67 L1204.00,831.40 L1204.25,829.12 L1204.50,826.85 L1204.75,824.58 L1205.00,822.31 L1205.25,820.04 L1205.50,817.77 L1205.75,815.49 L1206.00,813.22 L1206.25,810.95 L1206.50,808.68 L1206.75,806.41 L1207.00,804.13 L1207.25,801.86 L1207.50,799.59 L1207.75,800.45 L1208.00,801.78 L1208.25,803.10 L1208.50,804.42 L1208.75,805.74 L1209.00,807.07 L1209.25,808.39 L1209.50,809.71 L1209.75,811.04 L1210.00,812.36 L1210.25,813.68 L1210.50,815.00 L1210.75,816.33 L1211.00,817.65 L1211.25,818.97 L1211.50,820.30 L1211.75,821.62 L1212.00,822.94 L1212.25,824.26 L1212.50,825.59 L1212.75,826.91 L1213.00,828.23 L1213.25,829.56 L1213.50,830.88 L1213.75,832.20 L1214.00,833.52 L1214.25,834.85 L1214.50,836.17 L1214.75,837.49 L1215.00,838.82 L1215.25,840.14 L1215.50,841.46 L1215.75,842.78 L1216.00,844.11 L1216.25,845.43 L1216.50,846.75 L1216.75,848.08 L1217.00,849.40 L1217.25,850.72 L1217.50,852.04 L1217.75,853.37 L1218.00,854.69 L1218.25,856.01 L1218.50,857.34 L1218.75,858.66 L1219.00,859.98 L1219.25,861.30 L1219.50,862.63 L1219.75,863.95 L1220.00,865.27 L1220.25,866.60 L1220.50,867.92 L1220.75,869.24 L1221.00,870.56 L1221.25,871.89 L1221.50,873.21 L1221.75,874.53 L1222.00,875.85 L1222.25,877.18 L1222.50,878.50 L1222.75,879.82 L1223.00,881.15 L1223.25,882.47 L1223.50,883.79 L1223.75,885.11 L1224.00,886.44 L1224.25,887.76 L1224.50,889.08 L1224.75,890.41 L1225.00,891.73 L1225.25,893.05 L1225.50,894.37 L1225.75,895.70 L1226.00,897.02 L1226.25,898.34 L1226.50,899.67 L1226.75,900.99 L1227.00,902.31 L1227.25,903.63 L1227.50,904.96 L1227.75,906.28 L1228.00,907.60 L1228.25,908.93 L1228.50,910.25 L1228.75,911.57 L1229.00,912.89 L1229.25,910.91 L1229.50,908.64 L1229.75,906.37 L1230.00,904.09 L1230.25,901.82 L1230.50,899.55 L1230.75,897.28 L1231.00,895.01 L1231.25,892.74 L1231.50,890.46 L1231.75,888.19 L1232.00,885.92 L1232.25,883.65 L1232.50,881.38 L1232.75,879.10 L1233.00,876.83 L1233.25,874.56 L1233.50,872.29 L1233.75,870.02 L1234.00,867.75 L1234.25,865.47 L1234.50,863.20 L1234.75,860.93 L1235.00,858.66 L1235.25,856.39 L1235.50,854.11 L1235.75,851.84 L1236.00,849.57 L1236.25,847.30 L1236.50,845.03 L1236.75,842.76 L1237.00,840.48 L1237.25,838.21 L1237.50,835.94 L1237.75,833.67 L1238.00,831.40 L1238.25,829.12 L1238.50,826.85 L1238.75,824.58 L1239.00,822.31 L1239.25,820.04 L1239.50,817.77 L1239.75,815.49 L1240.00,813.22 L1240.25,810.95 L1240.50,808.68 L1240.75,806.41 L1241.00,804.13 L1241.25,801.86 L1241.50,799.59 L1241.75,800.45 L1242.00,801.78 L1242.25,803.10 L1242.50,804.42 L1242.75,805.74 L1243.00,807.07 L1243.25,808.39 L1243.50,809.71 L1243.75,811.04 L1244.00,812.36 L1244.25,813.68 L1244.50,815.00 L1244.75,816.33 L1245.00,817.65 L1245.25,818.97 L1245.50,820.30 L1245.75,821.62 L1246.00,822.94 L1246.25,824.26 L1246.50,825.59 L1246.75,826.91 L1247.00,828.23 L1247.25,829.56 L1247.50,830.88 L1247.75,832.20 L1248.00,833.52 L1248.25,834.85 L1248.50,836.17 L1248.75,837.49 L1249.00,838.82 L1249.25,840.14 L1249.50,841.46 L1249.75,842.78 L1250.00,844.11 L1250.25,845.43 L1250.50,846.75 L1250.75,848.08 L1251.00,849.40 L1251.25,850.72 L1251.50,852.04 L1251.75,853.37 L1252.00,854.69 L1252.25,856.01 L1252.50,857.34 L1252.75,858.66 L1253.00,859.98 L1253.25,861.30 L1253.50,862.63 L1253.75,863.95 L1254.00,865.27 L1254.25,866.60 L1254.50,867.92 L1254.75,869.24 L1255.00,870.56 L1255.25,871.89 L1255.50,873.21 L1255.75,874.53 L1256.00,875.85 L1256.25,877.18 L1256.50,878.50 L1256.75,879.82 L1257.00,881.15 L1257.25,882.47 L1257.50,883.79 L1257.75,885.11 L1258.00,886.44 L1258.25,887.76 L1258.50,889.08 L1258.75,890.41 L1259.00,891.73 L1259.25,893.05 L1259.50,894.37 L1259.75,895.70 L1260.00,897.02 L1260.25,898.34 L1260.50,899.67 L1260.75,900.99 L1261.00,902.31 L1261.25,903.63 L1261.50,904.96 L1261.75,906.28 L1262.00,907.60 L1262.25,908.93 L1262.50,910.25 L1262.75,911.57 L1263.00,912.89 L1263.25,910.91 L1263.50,908.64 L1263.75,906.37 L1264.00,904.09 L1264.25,901.82 L1264.50,899.55 L1264.75,897.28 L1265.00,895.01 L1265.25,892.74 L1265.50,890.46 L1265.75,888.19 L1266.00,885.92 L1266.25,883.65 L1266.50,881.38 L1266.75,879.10 L1267.00,876.83 L1267.25,874.56 L1267.50,872.29 L1267.75,870.02 L1268.00,867.75 L1268.25,865.47 L1268.50,863.20 L1268.75,860.93 L1269.00,858.66 L1269.25,856.39 L1269.50,854.11 L1269.75,851.84 L1270.00,849.57 L1270.25,847.30 L1270.50,845.03 L1270.75,842.76 L1271.00,840.48 L1271.25,838.21 L1271.50,835.94 L1271.75,833.67 L1272.00,831.40 L1272.25,829.12 L1272.50,826.85 L1272.75,824.58 L1273.00,822.31 L1273.25,820.04 L1273.50,817.77 L1273.75,815.49 L1274.00,813.22 L1274.25,810.95 L1274.50,808.68 L1274.75,806.41 L1275.00,804.13 L1275.25,801.86 L1275.50,799.59 L1275.75,800.45 L1276.00,801.78 L1276.25,803.10 L1276.50,804.42 L1276.75,805.74 L1277.00,807.07 L1277.25,808.39 L1277.50,809.71 L1277.75,811.04 L1278.00,812.36 L1278.25,813.68 L1278.50,815.00 L1278.75,816.33 L1279.00,817.65 L1279.25,818.97 L1279.50,820.30 L1279.75,821.62 L1280.00,822.94 L1280.25,824.26 L1280.50,825.59 L1280.75,826.91 L1281.00,828.23 L1281.25,829.56 L1281.50,830.88 L1281.75,832.20 L1282.00,833.52 L1282.25,834.85 L1282.50,836.17 L1282.75,837.49 L1283.00,838.82 L1283.25,840.14 L1283.50,841.46 L1283.75,842.78 L1284.00,844.11 L1284.25,845.43 L1284.50,846.75 L1284.75,848.08 L1285.00,849.40 L1285.25,850.72 L1285.50,852.04 L1285.75,853.37 L1286.00,854.69 L1286.25,856.01 L1286.50,857.34 L1286.75,858.66 L1287.00,859.98 L1287.25,861.30 L1287.50,862.63 L1287.75,863.95 L1288.00,865.27 L1288.25,866.60 L1288.50,867.92 L1288.75,869.24 L1289.00,870.56 L1289.25,871.89 L1289.50,873.21 L1289.75,874.53 L1290.00,875.85 L1290.25,877.18 L1290.50,878.50 L1290.75,879.82 L1291.00,881.15 L1291.25,882.47 L1291.50,883.79 L1291.75,885.11 L1292.00,886.44 L1292.25,887.76 L1292.50,889.08 L1292.75,890.41 L1293.00,891.73 L1293.25,893.05 L1293.50,894.37 L1293.75,895.70 L1294.00,897.02 L1294.25,898.34 L1294.50,899.67 L1294.75,900.99 L1295.00,902.31 L1295.25,903.63 L1295.50,904.96 L1295.75,906.28 L1296.00,907.60 L1296.25,908.93 L1296.50,910.25 L1296.75,911.57 L1297.00,912.89 L1297.25,910.91 L1297.50,908.64 L1297.75,906.37 L1298.00,904.09 L1298.25,901.82 L1298.50,899.55 L1298.75,897.28 L1299.00,895.01 L1299.25,892.74 L1299.50,890.46 L1299.75,888.19 L1300.00,885.92 L1300.25,883.65 L1300.50,881.38 L1300.75,879.10 L1301.00,876.83 L1301.25,874.56 L1301.50,872.29 L1301.75,870.02 L1302.00,867.75 L1302.25,865.47 L1302.50,863.20 L1302.75,860.93 L1303.00,858.66 L1303.25,856.39 L1303.50,854.11 L1303.75,851.84 L1304.00,849.57 L1304.25,847.30 L1304.50,845.03 L1304.75,842.76 L1305.00,840.48 L1305.25,838.21 L1305.50,835.94 L1305.75,833.67 L1306.00,831.40 L1306.25,829.12 L1306.50,826.85 L1306.75,824.58 L1307.00,822.31 L1307.25,820.04 L1307.50,817.77 L1307.75,815.49 L1308.00,813.22 L1308.25,810.95 L1308.50,808.68 L1308.75,806.41 L1309.00,804.13 L1309.25,801.86 L1309.50,799.59 L1309.75,800.45 L1310.00,801.78 L1310.25,803.10 L1310.50,804.42 L1310.75,805.74 L1311.00,807.07 L1311.25,808.39 L1311.50,809.71 L1311.75,811.04 L1312.00,812.36 L1312.25,813.68 L1312.50,815.00 L1312.75,816.33 L1313.00,817.65 L1313.25,818.97 L1313.50,820.30 L1313.75,821.62 L1314.00,822.94 L1314.25,824.26 L1314.50,825.59 L1314.75,826.91 L1315.00,828.23 L1315.25,829.56 L1315.50,830.88 L1315.75,832.20 L1316.00,833.52 L1316.25,834.85 L1316.50,836.17 L1316.75,837.49 L1317.00,838.82 L1317.25,840.14 L1317.50,841.46 L1317.75,842.78 L1318.00,844.11 L1318.25,845.43 L1318.50,846.75 L1318.75,848.08 L1319.00,849.40 L1319.25,850.72 L1319.50,852.04 L1319.75,853.37 L1320.00,854.69 L1320.25,856.01 L1320.50,857.34 L1320.75,858.66 L1321.00,859.98 L1321.25,861.30 L1321.50,862.63 L1321.75,863.95 L1322.00,865.27 L1322.25,866.60 L1322.50,867.92 L1322.75,869.24 L1323.00,870.56 L1323.25,871.89 L1323.50,873.21 L1323.75,874.53 L1324.00,875.85 L1324.25,877.18 L1324.50,878.50 L1324.75,879.82 L1325.00,881.15 L1325.25,882.47 L1325.50,883.79 L1325.75,885.11 L1326.00,886.44 L1326.25,887.76 L1326.50,889.08 L1326.75,890.41 L1327.00,891.73 L1327.25,893.05 L1327.50,894.37 L1327.75,895.70 L1328.00,897.02 L1328.25,898.34 L1328.50,899.67 L1328.75,900.99 L1329.00,902.31 L1329.25,903.63 L1329.50,904.96 L1329.75,906.28 L1330.00,907.60 L1330.25,908.93 L1330.50,910.25 L1330.75,911.57 L1331.00,912.89 L1331.25,910.91 L1331.50,908.64 L1331.75,906.37 L1332.00,904.09 L1332.25,901.82 L1332.50,899.55 L1332.75,897.28 L1333.00,895.01 L1333.25,892.74 L1333.50,890.46 L1333.75,888.19 L1334.00,885.92 L1334.25,883.65 L1334.50,881.38 L1334.75,879.10 L1335.00,876.83 L1335.25,874.56 L1335.50,872.29 L1335.75,870.02 L1336.00,867.75 L1336.25,865.47 L1336.50,863.20 L1336.75,860.93 L1337.00,858.66 L1337.25,856.39 L1337.50,854.11 L1337.75,851.84 L1338.00,849.57 L1338.25,847.30 L1338.50,845.03 L1338.75,842.76 L1339.00,840.48 L1339.25,838.21 L1339.50,835.94 L1339.75,833.67 L1340.00,831.40 L1340.25,829.12 L1340.50,826.85 L1340.75,824.58 L1341.00,822.31 L1341.25,820.04 L1341.50,817.77 L1341.75,815.49 L1342.00,813.22 L1342.25,810.95 L1342.50,808.68 L1342.75,806.41 L1343.00,804.13 L1343.25,801.86 L1343.50,799.59 L1343.75,800.45 L1344.00,801.78 L1344.25,803.10 L1344.50,804.42 L1344.75,805.74 L1345.00,807.07 L1345.25,808.39 L1345.50,809.71 L1345.75,811.04 L1346.00,812.36 L1346.25,813.68 L1346.50,815.00 L1346.75,816.33 L1347.00,817.65 L1347.25,818.97 L1347.50,820.30 L1347.75,821.62 L1348.00,822.94 L1348.25,824.26 L1348.50,825.59 L1348.75,826.91 L1349.00,828.23 L1349.25,829.56 L1349.50,830.88 L1349.75,832.20 L1350.00,833.52 L1350.25,834.85 L1350.50,836.17 L1350.75,837.49 L1351.00,838.82 L1351.25,840.14 L1351.50,841.46 L1351.75,842.78 L1352.00,844.11 L1352.25,845.43 L1352.50,846.75 L1352.75,848.08 L1353.00,849.40 L1353.25,850.72 L1353.50,852.04 L1353.75,853.37 L1354.00,854.69 L1354.25,856.01 L1354.50,857.34 L1354.75,858.66 L1355.00,859.98 L1355.25,861.30 L1355.50,862.63" fill="none" stroke="#10f010" stroke-width="1.25" stroke-linejoin="round"/>
</g>
<line x1="1015.5" y1="933.5" x2="1015.5" y2="940.5" stroke="#a8a8a8" stroke-width="1"/>
<text x="1015.5" y="954" font-size="12.5" fill="#b4b4b4" stroke="#b4b4b4" stroke-width="0.3" text-anchor="middle">0ms</text>
<line x1="1083.5" y1="933.5" x2="1083.5" y2="940.5" stroke="#a8a8a8" stroke-width="1"/>
<text x="1083.5" y="954" font-size="12.5" fill="#b4b4b4" stroke="#b4b4b4" stroke-width="0.3" text-anchor="middle">20ms</text>
<line x1="1151.5" y1="933.5" x2="1151.5" y2="940.5" stroke="#a8a8a8" stroke-width="1"/>
<text x="1151.5" y="954" font-size="12.5" fill="#b4b4b4" stroke="#b4b4b4" stroke-width="0.3" text-anchor="middle">40ms</text>
<line x1="1219.5" y1="933.5" x2="1219.5" y2="940.5" stroke="#a8a8a8" stroke-width="1"/>
<text x="1219.5" y="954" font-size="12.5" fill="#b4b4b4" stroke="#b4b4b4" stroke-width="0.3" text-anchor="middle">60ms</text>
<line x1="1287.5" y1="933.5" x2="1287.5" y2="940.5" stroke="#a8a8a8" stroke-width="1"/>
<text x="1287.5" y="954" font-size="12.5" fill="#b4b4b4" stroke="#b4b4b4" stroke-width="0.3" text-anchor="middle">80ms</text>
<line x1="1355.5" y1="933.5" x2="1355.5" y2="940.5" stroke="#a8a8a8" stroke-width="1"/>
<text x="1355.5" y="954" font-size="12.5" fill="#b4b4b4" stroke="#b4b4b4" stroke-width="0.3" text-anchor="middle">100ms</text>
<line x1="1036.5" y1="49.5" x2="1036.5" y2="326.5" stroke="#e8e8e8" stroke-width="1" stroke-dasharray="3,3"/>
<line x1="1059.5" y1="49.5" x2="1059.5" y2="326.5" stroke="#e8e8e8" stroke-width="1" stroke-dasharray="3,3"/>
<line x1="1036.5" y1="351.5" x2="1036.5" y2="628.5" stroke="#e8e8e8" stroke-width="1" stroke-dasharray="3,3"/>
<line x1="1059.5" y1="351.5" x2="1059.5" y2="628.5" stroke="#e8e8e8" stroke-width="1" stroke-dasharray="3,3"/>
<line x1="1036.5" y1="653.5" x2="1036.5" y2="933.5" stroke="#e8e8e8" stroke-width="1" stroke-dasharray="3,3"/>
<line x1="1059.5" y1="653.5" x2="1059.5" y2="933.5" stroke="#e8e8e8" stroke-width="1" stroke-dasharray="3,3"/>
<line x1="1018.5" y1="62.5" x2="1355.5" y2="62.5" stroke="#e8e8e8" stroke-width="1" stroke-dasharray="3,3"/>
<line x1="1018.5" y1="352.5" x2="1355.5" y2="352.5" stroke="#e8e8e8" stroke-width="1" stroke-dasharray="3,3"/>
<text x="1133.6" y="40" font-size="13.8" fill="#f020f0" stroke="#f020f0" stroke-width="0.45" textLength="103" lengthAdjust="spacingAndGlyphs">V(psrr_spk_amp)</text>
<rect x="1131.5" y="27.5" width="107" height="17" fill="none" stroke="#e8e8e8" stroke-width="1.1" stroke-dasharray="3,3"/>
<text x="1126.4" y="341.6" font-size="13.8" fill="#18b4bc" stroke="#18b4bc" stroke-width="0.45" textLength="117.6" lengthAdjust="spacingAndGlyphs">V(psrr_spk_spl_db)</text>
<rect x="1125.5" y="329.5" width="119.5" height="17" fill="none" stroke="#e8e8e8" stroke-width="1.1" stroke-dasharray="3,3"/>
<text x="1058.4" y="644" font-size="13.8" fill="#10f010" stroke="#10f010" stroke-width="0.45" textLength="82" lengthAdjust="spacingAndGlyphs">V(pvdd_amp)</text>
<text x="1221.9" y="644" font-size="13.8" fill="#80d8f8" stroke="#80d8f8" stroke-width="0.45" textLength="96" lengthAdjust="spacingAndGlyphs">V(pvdd_supply)</text>
<rect x="1099" y="419" width="269" height="196" fill="#a2a3a6" />
<path d="M1099.5,614.5 V419.5 H1367.5" stroke="#d6d2ce" stroke-width="1" fill="none" />
<path d="M1100.5,613.5 V420.5 H1366.5" stroke="#f0f0f0" stroke-width="1" fill="none" />
<path d="M1099.5,614.5 H1367.5 V419.5" stroke="#403838" stroke-width="1" fill="none" />
<path d="M1100.5,613.5 H1366.5 V420.5" stroke="#6a6a6e" stroke-width="1" fill="none" />
<rect x="1102" y="422.5" width="262.5" height="17" fill="url(#dg)" />
<path d="M1110.3,426.5 L1107.3,435 M1104,435.4 H1111.5 M1112,427 H1119 M1116.2,427.5 L1113.5,434.5" stroke="#5a4840" stroke-width="2" fill="none" />
<text x="1122.2" y="434.8" font-size="12" font-weight="bold" fill="#ffffff" textLength="161" lengthAdjust="spacingAndGlyphs">Ripple_Noise_Whisperer.raw</text>
<rect x="1347" y="424.5" width="16" height="13.5" fill="#a2a3a6" />
<path d="M1348.5,436.5 V426.0 H1361.5" stroke="#dcd8d4" stroke-width="1" fill="none" />
<path d="M1348.5,436.5 H1361.5 V426.0" stroke="#6a6a6e" stroke-width="1" fill="none" />
<path d="M1347.5,437.5 H1362.5 V425.0" stroke="#403838" stroke-width="1" fill="none" />
<path d="M1351.5,427.5 L1358.5,435 M1358.5,427.5 L1351.5,435" stroke="#000" stroke-width="1.6" fill="none" />
<path d="M1102.5,448.5 H1109 M1150,448.5 H1363.5 V493.5 H1102.5 V448.5" stroke="#6a6a6e" stroke-width="1" fill="none" />
<path d="M1103.5,492.5 V449.5 H1109 M1150,449.5 H1362.5" stroke="#e0dcd8" stroke-width="1" fill="none" />
<path d="M1102,494.5 H1364.5 V448" stroke="#e0dcd8" stroke-width="1" fill="none" />
<clipPath id="cc1"><rect x="1100" y="446.3" width="100" height="20"/></clipPath>
<g clip-path="url(#cc1)">
<text x="1111.6" y="452" font-size="13" fill="#000" text-anchor="start" textLength="37" lengthAdjust="spacingAndGlyphs">Cursor 1</text>
</g>
<text x="1232.7" y="463.3" font-size="13" fill="#000" text-anchor="middle" textLength="79" lengthAdjust="spacingAndGlyphs">V(psrr_spk_amp)</text>
<text x="1106.7" y="484" font-size="13" fill="#000" text-anchor="start" textLength="23.4" lengthAdjust="spacingAndGlyphs">Horz:</text>
<text x="1262.8" y="484" font-size="13" fill="#000" text-anchor="end" textLength="22" lengthAdjust="spacingAndGlyphs">Vert:</text>
<rect x="1134" y="470.5" width="91" height="19.0" fill="#f0f0f0" />
<path d="M1134.5,489.0 V471.0 H1224.5" stroke="#6a6a6e" stroke-width="1" fill="none" />
<path d="M1135.5,488.0 V472.0 H1223.5" stroke="#403838" stroke-width="1" fill="none" />
<path d="M1134.5,489.0 H1224.5 V471.0" stroke="#e8e8e8" stroke-width="1" fill="none" />
<text x="1138" y="484.5" font-size="13" fill="#000" text-anchor="start" textLength="51.6" lengthAdjust="spacingAndGlyphs">6.27138ms</text>
<rect x="1269" y="470.5" width="91" height="19.0" fill="#f0f0f0" />
<path d="M1269.5,489.0 V471.0 H1359.5" stroke="#6a6a6e" stroke-width="1" fill="none" />
<path d="M1270.5,488.0 V472.0 H1358.5" stroke="#403838" stroke-width="1" fill="none" />
<path d="M1269.5,489.0 H1359.5 V471.0" stroke="#e8e8e8" stroke-width="1" fill="none" />
<text x="1273" y="484.5" font-size="13" fill="#000" text-anchor="start" textLength="52" lengthAdjust="spacingAndGlyphs">420.459μV</text>
<path d="M1102.5,502.5 H1109 M1150,502.5 H1363.5 V547.5 H1102.5 V502.5" stroke="#6a6a6e" stroke-width="1" fill="none" />
<path d="M1103.5,546.5 V503.5 H1109 M1150,503.5 H1362.5" stroke="#e0dcd8" stroke-width="1" fill="none" />
<path d="M1102,548.5 H1364.5 V502" stroke="#e0dcd8" stroke-width="1" fill="none" />
<text x="1111.6" y="506.6" font-size="13" fill="#000" text-anchor="start" textLength="38" lengthAdjust="spacingAndGlyphs">Cursor 2</text>
<text x="1232.7" y="519.2" font-size="13" fill="#000" text-anchor="middle" textLength="90" lengthAdjust="spacingAndGlyphs">V(psrr_spk_spl_db)</text>
<text x="1106.7" y="539.3" font-size="13" fill="#000" text-anchor="start" textLength="23.4" lengthAdjust="spacingAndGlyphs">Horz:</text>
<text x="1262.8" y="539.3" font-size="13" fill="#000" text-anchor="end" textLength="22" lengthAdjust="spacingAndGlyphs">Vert:</text>
<rect x="1134" y="526.5" width="91" height="19.0" fill="#f0f0f0" />
<path d="M1134.5,545.0 V527.0 H1224.5" stroke="#6a6a6e" stroke-width="1" fill="none" />
<path d="M1135.5,544.0 V528.0 H1223.5" stroke="#403838" stroke-width="1" fill="none" />
<path d="M1134.5,545.0 H1224.5 V527.0" stroke="#e8e8e8" stroke-width="1" fill="none" />
<text x="1138" y="540.5" font-size="13" fill="#000" text-anchor="start" textLength="51.6" lengthAdjust="spacingAndGlyphs">12.8848ms</text>
<rect x="1269" y="526.5" width="91" height="19.0" fill="#f0f0f0" />
<path d="M1269.5,545.0 V527.0 H1359.5" stroke="#6a6a6e" stroke-width="1" fill="none" />
<path d="M1270.5,544.0 V528.0 H1358.5" stroke="#403838" stroke-width="1" fill="none" />
<path d="M1269.5,545.0 H1359.5 V527.0" stroke="#e8e8e8" stroke-width="1" fill="none" />
<rect x="1272" y="529.5" width="47.5" height="13.0" fill="#0a246a" />
<text x="1273" y="540.5" font-size="13" fill="#ffffff" text-anchor="start" textLength="45" lengthAdjust="spacingAndGlyphs">16.5579V</text>
<path d="M1102.5,557.5 H1109 M1221,557.5 H1363.5 V609.5 H1102.5 V557.5" stroke="#6a6a6e" stroke-width="1" fill="none" />
<path d="M1103.5,608.5 V558.5 H1109 M1221,558.5 H1362.5" stroke="#e0dcd8" stroke-width="1" fill="none" />
<path d="M1102,610.5 H1364.5 V557" stroke="#e0dcd8" stroke-width="1" fill="none" />
<text x="1111.6" y="561.5" font-size="13" fill="#000" text-anchor="start" textLength="106" lengthAdjust="spacingAndGlyphs">Diff (Cursor2 - Cursor1)</text>
<text x="1106.7" y="578.2" font-size="13" fill="#000" text-anchor="start" textLength="23.4" lengthAdjust="spacingAndGlyphs">Horz:</text>
<text x="1262.8" y="578.2" font-size="13" fill="#000" text-anchor="end" textLength="22" lengthAdjust="spacingAndGlyphs">Vert:</text>
<rect x="1134" y="565.5" width="91" height="19.0" fill="#f0f0f0" />
<path d="M1134.5,584.0 V566.0 H1224.5" stroke="#6a6a6e" stroke-width="1" fill="none" />
<path d="M1135.5,583.0 V567.0 H1223.5" stroke="#403838" stroke-width="1" fill="none" />
<path d="M1134.5,584.0 H1224.5 V566.0" stroke="#e8e8e8" stroke-width="1" fill="none" />
<text x="1138" y="579.5" font-size="13" fill="#000" text-anchor="start" textLength="51.6" lengthAdjust="spacingAndGlyphs">6.61345ms</text>
<rect x="1269" y="565.5" width="91" height="19.0" fill="#f0f0f0" />
<path d="M1269.5,584.0 V566.0 H1359.5" stroke="#6a6a6e" stroke-width="1" fill="none" />
<path d="M1270.5,583.0 V567.0 H1358.5" stroke="#403838" stroke-width="1" fill="none" />
<path d="M1269.5,584.0 H1359.5 V566.0" stroke="#e8e8e8" stroke-width="1" fill="none" />
<text x="1273" y="579.5" font-size="13" fill="#000" text-anchor="start" textLength="45" lengthAdjust="spacingAndGlyphs">16.5575V</text>
<text x="1107.5" y="600.2" font-size="13" fill="#000" text-anchor="start" textLength="22.5" lengthAdjust="spacingAndGlyphs">Freq:</text>
<text x="1262.8" y="600.2" font-size="13" fill="#000" text-anchor="end" textLength="29" lengthAdjust="spacingAndGlyphs">Slope:</text>
<rect x="1134" y="587.5" width="91" height="19.0" fill="#f0f0f0" />
<path d="M1134.5,606.0 V588.0 H1224.5" stroke="#6a6a6e" stroke-width="1" fill="none" />
<path d="M1135.5,605.0 V589.0 H1223.5" stroke="#403838" stroke-width="1" fill="none" />
<path d="M1134.5,606.0 H1224.5 V588.0" stroke="#e8e8e8" stroke-width="1" fill="none" />
<text x="1138" y="601.5" font-size="13" fill="#000" text-anchor="start" textLength="52.5" lengthAdjust="spacingAndGlyphs">151.207Hz</text>
<rect x="1269" y="587.5" width="91" height="19.0" fill="#f0f0f0" />
<path d="M1269.5,606.0 V588.0 H1359.5" stroke="#6a6a6e" stroke-width="1" fill="none" />
<path d="M1270.5,605.0 V589.0 H1358.5" stroke="#403838" stroke-width="1" fill="none" />
<path d="M1269.5,606.0 H1359.5 V588.0" stroke="#e8e8e8" stroke-width="1" fill="none" />
<text x="1273" y="601.5" font-size="13" fill="#000" text-anchor="start" textLength="37.5" lengthAdjust="spacingAndGlyphs">2503.61</text>
</svg></body></html>
